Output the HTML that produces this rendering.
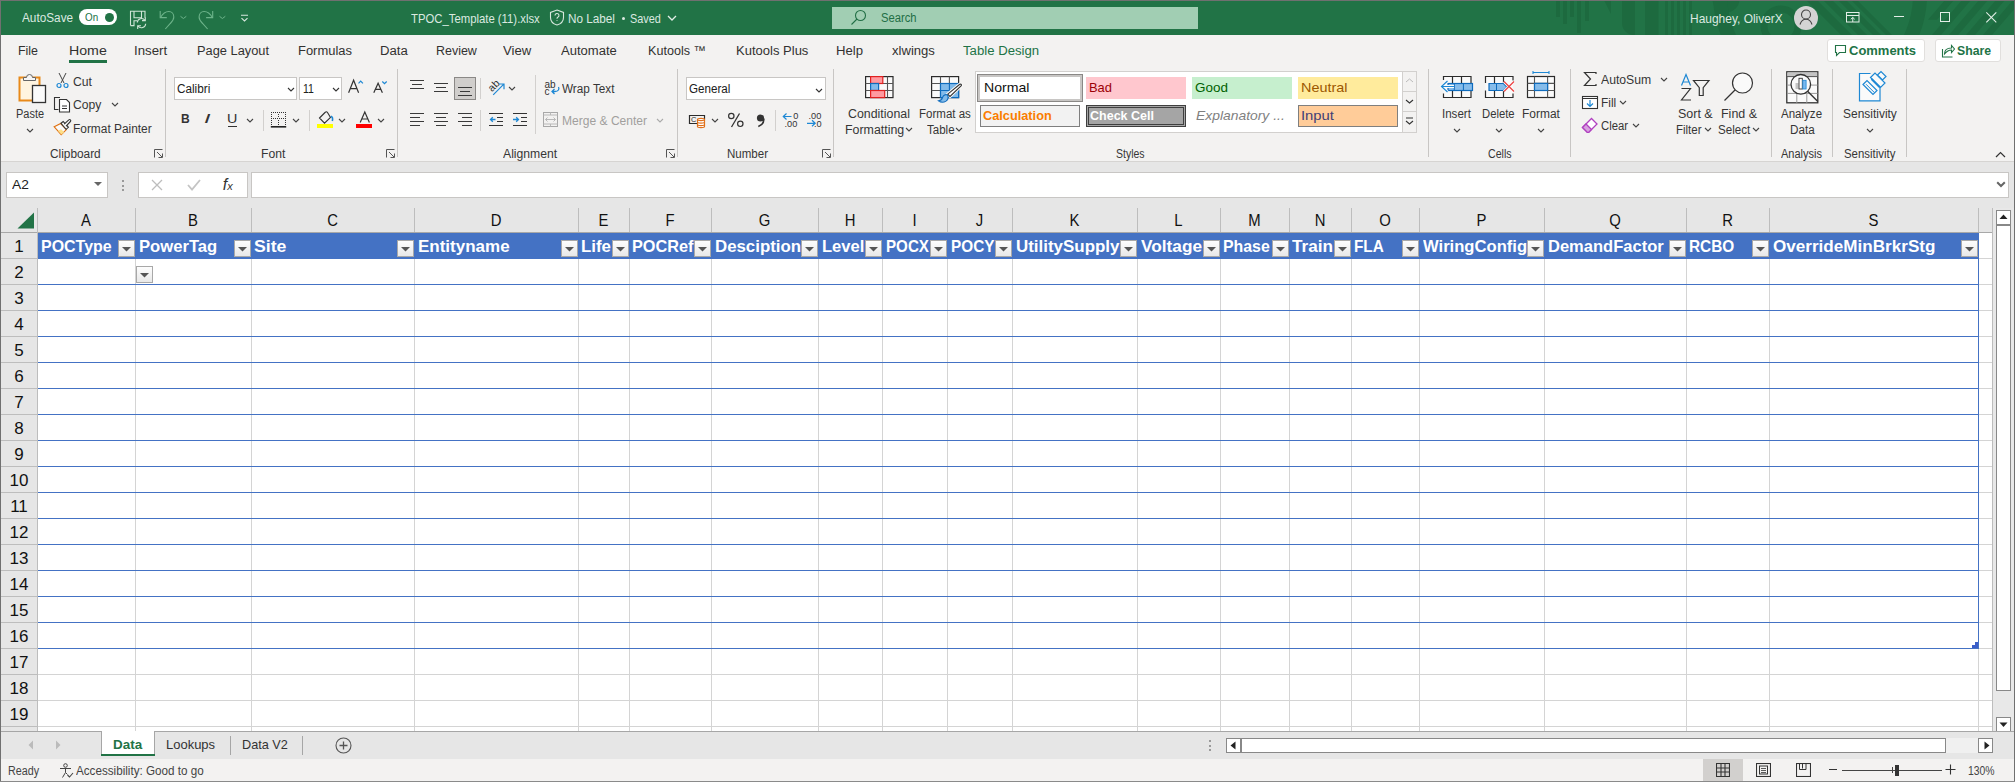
<!DOCTYPE html><html><head><meta charset="utf-8"><style>
html,body{margin:0;padding:0}
body{width:2015px;height:782px;overflow:hidden;position:relative;background:#f3f2f1;font-family:"Liberation Sans", sans-serif}
</style></head><body>
<div style="position:absolute;left:0px;top:0px;width:2015px;height:35px;background:#217346"></div>
<div id="t1" style="position:absolute;left:21.5px;top:11.53px;font-size:12.5px;line-height:12.5px;color:#dbe9e0;font-weight:normal;white-space:nowrap;transform:scaleX(0.9421);transform-origin:0 0;">AutoSave</div>
<div style="position:absolute;left:79px;top:9px;width:38px;height:16px;background:#fff;border-radius:8px"></div>
<div id="t2" style="position:absolute;left:84.54px;top:12.15px;font-size:11.5px;line-height:11.5px;color:#217346;font-weight:normal;white-space:nowrap;transform:scaleX(0.8537);transform-origin:0 0;">On</div>
<div style="position:absolute;left:105px;top:13px;width:9px;height:9px;background:#217346;border-radius:50%"></div>
<svg style="position:absolute;left:125px;top:5px;" width="130" height="27" viewBox="0 0 130 27"><path d="M5.5 20.6V6.3h14.5v6.5M9 6.3v6.5h7.5V6.3M5.5 20.6h3.5v-4.8h3" fill="none" stroke="#cfe5d7" stroke-width="1.1"/><path d="M12.3 17.5a4.2 4.2 0 0 1 7.6-2.2M20.7 18.8a4.2 4.2 0 0 1-7.6 2.2M20.3 12.3v3.3h-3.3M12.7 24v-3.3h3.3" fill="none" stroke="#cfe5d7" stroke-width="1.1"/><path d="M55.5 11.3l2.9 2.2 2.9-2.2M94.5 11.3l2.9 2.2 2.9-2.2" fill="none" stroke="#6db38a" stroke-width="1"/><path d="M116 10.3h7M116.5 13.2l3 2.8 3-2.8" fill="none" stroke="#d8e8de" stroke-width="1.1"/></svg>
<svg style="position:absolute;left:125px;top:5px;" width="130" height="27" viewBox="0 0 130 27"><path d="M35.2 6v6.6h6.6" fill="none" stroke="#6db38a" stroke-width="1.1"/><path d="M35.5 12.5c2-3.5 4.5-6 8.3-6 3 0 5 2.5 5 5.5 0 2.5-1.5 4.5-3.5 6.5l-5 5.5" fill="none" stroke="#6db38a" stroke-width="1.1"/></svg>
<svg style="position:absolute;left:125px;top:5px;" width="130" height="27" viewBox="0 0 130 27"><path d="M87.7 6v6.6h-6.6" fill="none" stroke="#6db38a" stroke-width="1.1"/><path d="M87.4 12.5c-2-3.5-4.5-6-8.3-6-3 0-5 2.5-5 5.5 0 2.5 1.5 4.5 3.5 6.5l5 5.5" fill="none" stroke="#6db38a" stroke-width="1.1"/></svg>
<div id="t3" style="position:absolute;left:411.48px;top:11.97px;font-size:13px;line-height:13px;color:#dbe9e0;font-weight:normal;white-space:nowrap;transform:scaleX(0.8710);transform-origin:0 0;">TPOC_Template (11).xlsx</div>
<svg style="position:absolute;left:549px;top:9px;" width="16" height="17" viewBox="0 0 16 17"><path d="M8 1l6.5 2.5v5c0 4-3 6.5-6.5 7.5C4.5 15 1.5 12.5 1.5 8.5v-5z" fill="none" stroke="#d8e8de" stroke-width="1.1"/><path d="M6 6.5a2 2 0 1 1 2.8 1.8c-.6.3-.8.7-.8 1.4M8 11.3v.8" fill="none" stroke="#d8e8de" stroke-width="1.1"/></svg>
<div id="t4" style="position:absolute;left:568.48px;top:11.97px;font-size:13px;line-height:13px;color:#dbe9e0;font-weight:normal;white-space:nowrap;transform:scaleX(0.9021);transform-origin:0 0;">No Label</div>
<div style="position:absolute;left:622px;top:17px;width:3px;height:3px;background:#dbe9e0;border-radius:50%"></div>
<div id="t5" style="position:absolute;left:630.48px;top:11.97px;font-size:13px;line-height:13px;color:#dbe9e0;font-weight:normal;white-space:nowrap;transform:scaleX(0.8354);transform-origin:0 0;">Saved</div>
<svg style="position:absolute;left:667px;top:15px;" width="10" height="7" viewBox="0 0 10 7"><path d="M1 1l4 4 4-4" fill="none" stroke="#e3eee7" stroke-width="1.3"/></svg>
<div style="position:absolute;left:832px;top:7px;width:366px;height:22px;background:#a1ceb3"></div>
<svg style="position:absolute;left:850px;top:9px;" width="17" height="17" viewBox="0 0 17 17"><circle cx="10.5" cy="6.5" r="5" fill="none" stroke="#226f46" stroke-width="1.1"/><path d="M7 10l-5.5 5.5" stroke="#226f46" stroke-width="1.1"/></svg>
<div id="t6" style="position:absolute;left:880.5px;top:12.03px;font-size:12.5px;line-height:12.5px;color:#226f46;font-weight:normal;white-space:nowrap;transform:scaleX(0.8969);transform-origin:0 0;">Search</div>
<svg style="position:absolute;left:0;top:0" width="2015" height="35" viewBox="0 0 2015 35"><rect x="1556" y="0" width="4" height="17" fill="#1d6a3f"/><rect x="1563" y="0" width="4" height="24" fill="#1d6a3f"/><rect x="1570" y="0" width="4" height="17" fill="#1d6a3f"/><rect x="1577" y="0" width="4" height="33" fill="#1d6a3f"/><rect x="1585" y="0" width="4" height="21" fill="#1d6a3f"/><path d="M1604 0h7v14z" fill="#1d6a3f"/><path d="M1622 0h13v35h-1a12 12 0 0 1-12-12z" fill="#1d6a3f"/><rect x="1645" y="0" width="13.5" height="35" fill="#1d6a3f"/><rect x="1665" y="0" width="3" height="35" fill="#1d6a3f"/><rect x="1671" y="0" width="3" height="35" fill="#1d6a3f"/><rect x="1677" y="0" width="3" height="35" fill="#1d6a3f"/><rect x="1683" y="0" width="3" height="35" fill="#1d6a3f"/><rect x="1689" y="0" width="3" height="35" fill="#1d6a3f"/><circle cx="1726" cy="-1" r="13.5" fill="#1d6a3f"/><circle cx="1781" cy="26" r="17" fill="none" stroke="#1d6a3f" stroke-width="7"/><path d="M1806 0h11l35 35h-11z" fill="#1d6a3f"/><path d="M1823 0h9l35 35h-9z" fill="#1d6a3f"/><path d="M1838 0h8l35 35h-8z" fill="#1d6a3f"/><path d="M1851 0h6l35 35h-6z" fill="#1d6a3f"/><circle cx="1820" cy="-5" r="100" fill="none" stroke="#1d6a3f" stroke-width="14"/><path d="M1945 0h9L1937.0 19.8H1928.0z" fill="#1d6a3f"/><path d="M1962 0h9L1941.0 35.0H1932.0z" fill="#1d6a3f"/><path d="M1979 0h9L1958.0 35.0H1949.0z" fill="#1d6a3f"/><path d="M1996 0h9L1975.0 35.0H1966.0z" fill="#1d6a3f"/><path d="M2013 0h9L1992.0 35.0H1983.0z" fill="#1d6a3f"/></svg>
<div id="t7" style="position:absolute;left:1690.48px;top:11.97px;font-size:13px;line-height:13px;color:#dbe9e0;font-weight:normal;white-space:nowrap;transform:scaleX(0.9199);transform-origin:0 0;">Haughey, OliverX</div>
<div style="position:absolute;left:1794px;top:6px;width:24px;height:24px;border-radius:50%;background:#d4d4d4"></div>
<svg style="position:absolute;left:1794px;top:6px;" width="24" height="24" viewBox="0 0 24 24"><circle cx="12" cy="8.5" r="4.5" fill="none" stroke="#444" stroke-width="1.1"/><path d="M6 18.5c1-3.5 3.3-5.3 6-5.3s5 1.8 6 5.3" fill="none" stroke="#444" stroke-width="1.1"/></svg>
<svg style="position:absolute;left:1845px;top:11px;" width="15" height="12" viewBox="0 0 15 12"><rect x="1.5" y="1.5" width="12.5" height="9.5" fill="none" stroke="#e3eee7" stroke-width="1"/><path d="M1.5 4.5h12.5M7.75 11V6.5M5.8 8.3l1.95-1.9 1.95 1.9" fill="none" stroke="#e3eee7" stroke-width="1"/></svg>
<div style="position:absolute;left:1894px;top:16px;width:10px;height:1px;background:#e3eee7"></div>
<div style="position:absolute;left:1940px;top:12px;width:10px;height:10px;border:1px solid #e3eee7;box-sizing:border-box"></div>
<svg style="position:absolute;left:1985px;top:11px;" width="13" height="13" viewBox="0 0 13 13"><path d="M1.3 1.3l10 10M11.3 1.3l-10 10" stroke="#e3eee7" stroke-width="1.1"/></svg>
<div id="t8" style="position:absolute;left:17.5px;top:44.53px;font-size:12.5px;line-height:12.5px;color:#323130;font-weight:normal;white-space:nowrap;transform:scaleX(0.9938);transform-origin:0 0;">File</div>
<div id="t9" style="position:absolute;left:69.0px;top:44.53px;font-size:12.5px;line-height:12.5px;color:#323130;font-weight:normal;white-space:nowrap;transform:scaleX(1.1326);transform-origin:0 0;">Home</div>
<div id="t10" style="position:absolute;left:133.5px;top:44.53px;font-size:12.5px;line-height:12.5px;color:#323130;font-weight:normal;white-space:nowrap;transform:scaleX(1.0605);transform-origin:0 0;">Insert</div>
<div id="t11" style="position:absolute;left:196.5px;top:44.53px;font-size:12.5px;line-height:12.5px;color:#323130;font-weight:normal;white-space:nowrap;transform:scaleX(1.0268);transform-origin:0 0;">Page Layout</div>
<div id="t12" style="position:absolute;left:297.5px;top:44.53px;font-size:12.5px;line-height:12.5px;color:#323130;font-weight:normal;white-space:nowrap;transform:scaleX(1.0361);transform-origin:0 0;">Formulas</div>
<div id="t13" style="position:absolute;left:379.5px;top:44.53px;font-size:12.5px;line-height:12.5px;color:#323130;font-weight:normal;white-space:nowrap;transform:scaleX(1.0529);transform-origin:0 0;">Data</div>
<div id="t14" style="position:absolute;left:435.5px;top:44.53px;font-size:12.5px;line-height:12.5px;color:#323130;font-weight:normal;white-space:nowrap;transform:scaleX(0.9970);transform-origin:0 0;">Review</div>
<div id="t15" style="position:absolute;left:503.0px;top:44.53px;font-size:12.5px;line-height:12.5px;color:#323130;font-weight:normal;white-space:nowrap;transform:scaleX(1.0509);transform-origin:0 0;">View</div>
<div id="t16" style="position:absolute;left:560.5px;top:44.53px;font-size:12.5px;line-height:12.5px;color:#323130;font-weight:normal;white-space:nowrap;transform:scaleX(1.0440);transform-origin:0 0;">Automate</div>
<div id="t17" style="position:absolute;left:647.5px;top:44.53px;font-size:12.5px;line-height:12.5px;color:#323130;font-weight:normal;white-space:nowrap;transform:scaleX(1.0065);transform-origin:0 0;">Kutools ™</div>
<div id="t18" style="position:absolute;left:735.5px;top:44.53px;font-size:12.5px;line-height:12.5px;color:#323130;font-weight:normal;white-space:nowrap;transform:scaleX(1.0417);transform-origin:0 0;">Kutools Plus</div>
<div id="t19" style="position:absolute;left:835.5px;top:44.53px;font-size:12.5px;line-height:12.5px;color:#323130;font-weight:normal;white-space:nowrap;transform:scaleX(1.0529);transform-origin:0 0;">Help</div>
<div id="t20" style="position:absolute;left:891.5px;top:44.53px;font-size:12.5px;line-height:12.5px;color:#323130;font-weight:normal;white-space:nowrap;transform:scaleX(1.0457);transform-origin:0 0;">xlwings</div>
<div id="t21" style="position:absolute;left:962.5px;top:44.53px;font-size:12.5px;line-height:12.5px;color:#217346;font-weight:normal;white-space:nowrap;transform:scaleX(1.0538);transform-origin:0 0;">Table Design</div>
<div style="position:absolute;left:69px;top:60px;width:38px;height:3px;background:#217346"></div>
<div style="position:absolute;left:1827px;top:39px;width:98px;height:23px;background:#fff;border:1px solid #e1dfdd;border-radius:3px;box-sizing:border-box"></div>
<svg style="position:absolute;left:1834px;top:44px;" width="13" height="13" viewBox="0 0 13 13"><path d="M1.5 1.5h10v7h-6l-3 3v-3h-1z" fill="none" stroke="#217346" stroke-width="1.1"/></svg>
<div id="t22" style="position:absolute;left:1849.48px;top:43.97px;font-size:13px;line-height:13px;color:#217346;font-weight:bold;white-space:nowrap;transform:scaleX(0.9987);transform-origin:0 0;">Comments</div>
<div style="position:absolute;left:1935px;top:39px;width:66px;height:23px;background:#fff;border:1px solid #e1dfdd;border-radius:3px;box-sizing:border-box"></div>
<svg style="position:absolute;left:1941px;top:43px;" width="14" height="15" viewBox="0 0 14 15"><path d="M1.5 6v8h10" fill="none" stroke="#217346" stroke-width="1.1"/><path d="M3.5 11c0-4 3-6 7-6V2.5l3 3.5-3 3.5V7c-3 0-5 1.5-7 4z" fill="none" stroke="#217346" stroke-width="1.1"/></svg>
<div id="t23" style="position:absolute;left:1957.48px;top:43.97px;font-size:13px;line-height:13px;color:#217346;font-weight:bold;white-space:nowrap;transform:scaleX(0.9419);transform-origin:0 0;">Share</div>
<div style="position:absolute;left:0px;top:161px;width:2015px;height:1px;background:#d6d4d2"></div>
<svg style="position:absolute;left:17px;top:72px;" width="31" height="32" viewBox="0 0 31 32"><rect x="2.5" y="5.5" width="20" height="23" fill="#fff4e0" stroke="#e8891a" stroke-width="2"/><path d="M6.5 8.5v-3h3a3 3 0 0 1 6 0h3v3z" fill="#f5f5f5" stroke="#666" stroke-width="1"/><rect x="15.5" y="13.5" width="13" height="17" fill="#fafafa" stroke="#333" stroke-width="1.3"/></svg>
<div id="t24" style="position:absolute;left:16.02px;top:108.09px;font-size:12px;line-height:12px;color:#363636;font-weight:normal;white-space:nowrap;transform:scaleX(0.9142);transform-origin:0 0;">Paste</div>
<svg style="position:absolute;left:26px;top:128px;" width="8" height="5" viewBox="0 0 8 5"><path d="M1 1l3.0 3 3.0 -3" fill="none" stroke="#444" stroke-width="1.1"/></svg>
<svg style="position:absolute;left:56px;top:72px;" width="13" height="17" viewBox="0 0 13 17"><path d="M3 1l5 10M10 1L5 11" stroke="#444" stroke-width="1"/><circle cx="3" cy="13.5" r="2" fill="none" stroke="#1e88d4" stroke-width="1.2"/><circle cx="10" cy="13.5" r="2" fill="none" stroke="#1e88d4" stroke-width="1.2"/></svg>
<div id="t25" style="position:absolute;left:73.02px;top:75.59px;font-size:12px;line-height:12px;color:#363636;font-weight:normal;white-space:nowrap;transform:scaleX(1.0179);transform-origin:0 0;">Cut</div>
<svg style="position:absolute;left:53px;top:95px;" width="18" height="18" viewBox="0 0 18 18"><path d="M7 2.5H1.5v12h4" fill="none" stroke="#333" stroke-width="1.1"/><path d="M6.5 4.5h7l3 3v9.5h-10z" fill="#fff" stroke="#333" stroke-width="1.1"/><path d="M9 11h5M9 13.5h5" stroke="#333" stroke-width="1"/></svg>
<div id="t26" style="position:absolute;left:73.02px;top:98.59px;font-size:12px;line-height:12px;color:#363636;font-weight:normal;white-space:nowrap;transform:scaleX(1.0121);transform-origin:0 0;">Copy</div>
<svg style="position:absolute;left:111px;top:102px;" width="8" height="5" viewBox="0 0 8 5"><path d="M1 1l3.0 3 3.0 -3" fill="none" stroke="#444" stroke-width="1.1"/></svg>
<svg style="position:absolute;left:50px;top:115px;" width="25" height="25" viewBox="0 0 25 25"><path d="M4.2 11.8l6.5-3.3 5.7 6.1-5.2 5z" fill="#fafafa" stroke="#e07010" stroke-width="1.2"/><path d="M7.8 15.8l3.3-1.6 3 3-2.7 2.3z" fill="#fde08a"/><path d="M11 8.3l2.2-1.8 5.2 5.8-2.3 2z" fill="#fafafa" stroke="#333" stroke-width="1.1"/><path d="M14.2 9.2l4.6-4.3a1.1 1.1 0 0 1 1.6 1.6l-4.3 4.6" fill="#fafafa" stroke="#333" stroke-width="1.1"/></svg>
<div id="t27" style="position:absolute;left:73.02px;top:123.09px;font-size:12px;line-height:12px;color:#363636;font-weight:normal;white-space:nowrap;transform:scaleX(0.9916);transform-origin:0 0;">Format Painter</div>
<div id="t28" style="position:absolute;left:49.52px;top:147.59px;font-size:12px;line-height:12px;color:#363636;font-weight:normal;white-space:nowrap;transform:scaleX(0.9871);transform-origin:0 0;">Clipboard</div>
<svg style="position:absolute;left:154px;top:149px;" width="9" height="9" viewBox="0 0 9 9"><path d="M0.5 8.5v-8h8" fill="none" stroke="#555" stroke-width="1"/><path d="M3 3l5 5M4.5 8.5h4v-4" fill="none" stroke="#555" stroke-width="1"/></svg>
<div style="position:absolute;left:165px;top:69px;width:1px;height:88px;background:#c8c6c4"></div>
<div style="position:absolute;left:174px;top:77px;width:123px;height:23px;background:#fff;border:1px solid #c8c6c4;box-sizing:border-box"></div>
<div id="t29" style="position:absolute;left:177.0px;top:82.53px;font-size:12.5px;line-height:12.5px;color:#202020;font-weight:normal;white-space:nowrap;transform:scaleX(0.9393);transform-origin:0 0;">Calibri</div>
<svg style="position:absolute;left:287px;top:87px;" width="8" height="5" viewBox="0 0 8 5"><path d="M1 1l3.0 3 3.0 -3" fill="none" stroke="#333" stroke-width="1.1"/></svg>
<div style="position:absolute;left:299px;top:77px;width:43px;height:23px;background:#fff;border:1px solid #c8c6c4;box-sizing:border-box"></div>
<div id="t30" style="position:absolute;left:302.5px;top:82.53px;font-size:12.5px;line-height:12.5px;color:#202020;font-weight:normal;white-space:nowrap;transform:scaleX(0.8365);transform-origin:0 0;">11</div>
<svg style="position:absolute;left:332px;top:87px;" width="8" height="5" viewBox="0 0 8 5"><path d="M1 1l3.0 3 3.0 -3" fill="none" stroke="#333" stroke-width="1.1"/></svg>
<svg style="position:absolute;left:265px;top:72px;" width="130" height="60" viewBox="0 0 130 60"><path d="M83.6 20.8L88.6 8.2l5 12.6M85.2 16.6h6.8" fill="none" stroke="#333" stroke-width="1.2"/><path d="M93.5 11.3l2.2-2.2 2.2 2.2" fill="none" stroke="#1e88d4" stroke-width="1.2"/><path d="M108.8 20.8l4.3-9.6 4.3 9.6M110.2 17.3h5.8" fill="none" stroke="#333" stroke-width="1.2"/><path d="M117.3 9.5l2.2 2.2 2.2-2.2" fill="none" stroke="#1e88d4" stroke-width="1.2"/></svg>
<div id="t31" style="position:absolute;left:180.96px;top:112.41px;font-size:13.5px;line-height:13.5px;color:#333;font-weight:bold;white-space:nowrap;transform:scaleX(0.8945);transform-origin:0 0;">B</div>
<div id="t32" style="position:absolute;left:203.96px;top:112.41px;font-size:13.5px;line-height:13.5px;color:#333;font-weight:normal;white-space:nowrap;transform:scaleX(1.7363);transform-origin:0 0;font-style:italic;font-family:"Liberation Serif",serif">I</div>
<div id="t33" style="position:absolute;left:227.48px;top:112.47px;font-size:13px;line-height:13px;color:#333;font-weight:normal;white-space:nowrap;transform:scaleX(1.1011);transform-origin:0 0;">U</div>
<div style="position:absolute;left:228px;top:126px;width:9px;height:1px;background:#333"></div>
<svg style="position:absolute;left:246px;top:118px;" width="8" height="5" viewBox="0 0 8 5"><path d="M1 1l3.0 3 3.0 -3" fill="none" stroke="#444" stroke-width="1.1"/></svg>
<div style="position:absolute;left:263px;top:110px;width:1px;height:21px;background:#d2d0ce"></div>
<svg style="position:absolute;left:265px;top:72px;" width="130" height="60" viewBox="0 0 130 60"><rect x="6" y="40" width="1" height="1" fill="#333"/><rect x="6" y="46" width="1" height="1" fill="#333"/><rect x="8" y="40" width="1" height="1" fill="#333"/><rect x="8" y="46" width="1" height="1" fill="#333"/><rect x="10" y="40" width="1" height="1" fill="#333"/><rect x="10" y="46" width="1" height="1" fill="#333"/><rect x="12" y="40" width="1" height="1" fill="#333"/><rect x="12" y="46" width="1" height="1" fill="#333"/><rect x="14" y="40" width="1" height="1" fill="#333"/><rect x="14" y="46" width="1" height="1" fill="#333"/><rect x="16" y="40" width="1" height="1" fill="#333"/><rect x="16" y="46" width="1" height="1" fill="#333"/><rect x="18" y="40" width="1" height="1" fill="#333"/><rect x="18" y="46" width="1" height="1" fill="#333"/><rect x="20" y="40" width="1" height="1" fill="#333"/><rect x="20" y="46" width="1" height="1" fill="#333"/><rect x="6" y="42" width="1" height="1" fill="#333"/><rect x="20" y="42" width="1" height="1" fill="#333"/><rect x="13" y="42" width="1" height="1" fill="#333"/><rect x="6" y="44" width="1" height="1" fill="#333"/><rect x="20" y="44" width="1" height="1" fill="#333"/><rect x="13" y="44" width="1" height="1" fill="#333"/><rect x="6" y="48" width="1" height="1" fill="#333"/><rect x="20" y="48" width="1" height="1" fill="#333"/><rect x="13" y="48" width="1" height="1" fill="#333"/><rect x="6" y="50" width="1" height="1" fill="#333"/><rect x="20" y="50" width="1" height="1" fill="#333"/><rect x="13" y="50" width="1" height="1" fill="#333"/><rect x="6" y="52" width="1" height="1" fill="#333"/><rect x="20" y="52" width="1" height="1" fill="#333"/><rect x="13" y="52" width="1" height="1" fill="#333"/><rect x="5.8" y="54" width="15.4" height="1.6" fill="#222"/></svg>
<svg style="position:absolute;left:292px;top:118px;" width="8" height="5" viewBox="0 0 8 5"><path d="M1 1l3.0 3 3.0 -3" fill="none" stroke="#444" stroke-width="1.1"/></svg>
<div style="position:absolute;left:309px;top:110px;width:1px;height:21px;background:#d2d0ce"></div>
<svg style="position:absolute;left:265px;top:72px;" width="130" height="60" viewBox="0 0 130 60"><path d="M54.5 46L60 40.5Q61.5 39 62.5 40.5L65.5 45.5 59.5 51.2Z" fill="none" stroke="#333" stroke-width="1.1"/><path d="M65.8 44.2c1.6 0.6 2.1 2.6 1.5 4.8" fill="none" stroke="#1e88d4" stroke-width="1.6"/></svg>
<div style="position:absolute;left:317px;top:124px;width:16px;height:4px;background:#ffff00"></div>
<svg style="position:absolute;left:338px;top:118px;" width="8" height="5" viewBox="0 0 8 5"><path d="M1 1l3.0 3 3.0 -3" fill="none" stroke="#444" stroke-width="1.1"/></svg>
<svg style="position:absolute;left:265px;top:72px;" width="130" height="60" viewBox="0 0 130 60"><path d="M95.2 50.5l4.6-10.5 4.6 10.5M96.7 47h6.2" fill="none" stroke="#333" stroke-width="1.2"/></svg>
<div style="position:absolute;left:356px;top:124px;width:16px;height:4px;background:#ff0000"></div>
<svg style="position:absolute;left:377px;top:118px;" width="8" height="5" viewBox="0 0 8 5"><path d="M1 1l3.0 3 3.0 -3" fill="none" stroke="#444" stroke-width="1.1"/></svg>
<div id="t34" style="position:absolute;left:261.02px;top:147.59px;font-size:12px;line-height:12px;color:#363636;font-weight:normal;white-space:nowrap;transform:scaleX(1.0142);transform-origin:0 0;">Font</div>
<svg style="position:absolute;left:386px;top:149px;" width="9" height="9" viewBox="0 0 9 9"><path d="M0.5 8.5v-8h8" fill="none" stroke="#555" stroke-width="1"/><path d="M3 3l5 5M4.5 8.5h4v-4" fill="none" stroke="#555" stroke-width="1"/></svg>
<div style="position:absolute;left:397px;top:69px;width:1px;height:88px;background:#c8c6c4"></div>
<div style="position:absolute;left:410px;top:80px;width:14px;height:1px;background:#3a3a3a"></div>
<div style="position:absolute;left:412px;top:84px;width:10px;height:1px;background:#3a3a3a"></div>
<div style="position:absolute;left:410px;top:88px;width:14px;height:1px;background:#3a3a3a"></div>
<div style="position:absolute;left:434px;top:83px;width:14px;height:1px;background:#3a3a3a"></div>
<div style="position:absolute;left:436px;top:87px;width:10px;height:1px;background:#3a3a3a"></div>
<div style="position:absolute;left:434px;top:91px;width:14px;height:1px;background:#3a3a3a"></div>
<div style="position:absolute;left:454px;top:77px;width:22px;height:23px;background:#d0cecc;border:1px solid #8a8886;box-sizing:border-box"></div>
<div style="position:absolute;left:458px;top:87px;width:14px;height:1px;background:#3a3a3a"></div>
<div style="position:absolute;left:460px;top:91px;width:10px;height:1px;background:#3a3a3a"></div>
<div style="position:absolute;left:458px;top:95px;width:14px;height:1px;background:#3a3a3a"></div>
<div style="position:absolute;left:480px;top:78px;width:1px;height:21px;background:#d2d0ce"></div>
<svg style="position:absolute;left:486px;top:78px;" width="20" height="19" viewBox="0 0 20 19"><text x="1.8" y="11.2" font-size="10.5" fill="#333" transform="rotate(-45 7.5 7.6)" font-family="Liberation Sans">ab</text><path d="M7.2 16.8L17.8 6.2M12.8 6h5.2v5.2" fill="none" stroke="#1e88d4" stroke-width="1.2"/></svg>
<svg style="position:absolute;left:508px;top:86px;" width="8" height="5" viewBox="0 0 8 5"><path d="M1 1l3.0 3 3.0 -3" fill="none" stroke="#444" stroke-width="1.1"/></svg>
<svg style="position:absolute;left:544px;top:78px;" width="17" height="19" viewBox="0 0 17 19"><text x="0.5" y="9.5" font-size="10" fill="#333" font-family="Liberation Sans">ab</text><text x="0.5" y="17" font-size="10" fill="#333" font-family="Liberation Sans">c</text><path d="M14.5 9c1 2 0 4.5-3.5 4.5H8M10.5 11l-2.5 2.5 2.5 2.5" fill="none" stroke="#1e88d4" stroke-width="1.3"/></svg>
<div id="t35" style="position:absolute;left:561.52px;top:82.59px;font-size:12px;line-height:12px;color:#363636;font-weight:normal;white-space:nowrap;transform:scaleX(0.9785);transform-origin:0 0;">Wrap Text</div>
<div style="position:absolute;left:535px;top:75px;width:1px;height:59px;background:#d2d0ce"></div>
<div style="position:absolute;left:410px;top:113px;width:14px;height:1px;background:#3a3a3a"></div>
<div style="position:absolute;left:410px;top:117px;width:10px;height:1px;background:#3a3a3a"></div>
<div style="position:absolute;left:410px;top:121px;width:14px;height:1px;background:#3a3a3a"></div>
<div style="position:absolute;left:410px;top:125px;width:10px;height:1px;background:#3a3a3a"></div>
<div style="position:absolute;left:434px;top:113px;width:14px;height:1px;background:#3a3a3a"></div>
<div style="position:absolute;left:436px;top:117px;width:10px;height:1px;background:#3a3a3a"></div>
<div style="position:absolute;left:434px;top:121px;width:14px;height:1px;background:#3a3a3a"></div>
<div style="position:absolute;left:436px;top:125px;width:10px;height:1px;background:#3a3a3a"></div>
<div style="position:absolute;left:458px;top:113px;width:14px;height:1px;background:#3a3a3a"></div>
<div style="position:absolute;left:462px;top:117px;width:10px;height:1px;background:#3a3a3a"></div>
<div style="position:absolute;left:458px;top:121px;width:14px;height:1px;background:#3a3a3a"></div>
<div style="position:absolute;left:462px;top:125px;width:10px;height:1px;background:#3a3a3a"></div>
<div style="position:absolute;left:480px;top:110px;width:1px;height:21px;background:#d2d0ce"></div>
<svg style="position:absolute;left:489px;top:112px;" width="15" height="16" viewBox="0 0 15 16"><rect x="0" y="1" width="14" height="1" fill="#333"/><rect x="8" y="5" width="6" height="1" fill="#333"/><rect x="8" y="9" width="6" height="1" fill="#333"/><rect x="0" y="13" width="14" height="1" fill="#333"/><path d="M6.5 7.5H1.5M3.8 5.2L1.5 7.5l2.3 2.3" fill="none" stroke="#1e88d4" stroke-width="1.3"/></svg>
<svg style="position:absolute;left:513px;top:112px;" width="15" height="16" viewBox="0 0 15 16"><rect x="0" y="1" width="14" height="1" fill="#333"/><rect x="8" y="5" width="6" height="1" fill="#333"/><rect x="8" y="9" width="6" height="1" fill="#333"/><rect x="0" y="13" width="14" height="1" fill="#333"/><path d="M0 7.5h5.5M3.2 5.2l2.3 2.3-2.3 2.3" fill="none" stroke="#1e88d4" stroke-width="1.3"/></svg>
<svg style="position:absolute;left:542px;top:111px;" width="17" height="17" viewBox="0 0 17 17"><rect x="1.5" y="1.5" width="14" height="14" fill="none" stroke="#a8a8a8" stroke-width="1"/><path d="M1.5 4h14M1.5 13h14M8.5 1.5v2.5M8.5 13v2.5M3.5 8.5h10M5.5 6.5l-2 2 2 2M11.5 6.5l2 2-2 2" fill="none" stroke="#b8b8b8" stroke-width="1"/></svg>
<div id="t36" style="position:absolute;left:562.02px;top:114.59px;font-size:12px;line-height:12px;color:#a19f9d;font-weight:normal;white-space:nowrap;transform:scaleX(1.0040);transform-origin:0 0;">Merge &amp; Center</div>
<svg style="position:absolute;left:656px;top:118px;" width="8" height="5" viewBox="0 0 8 5"><path d="M1 1l3.0 3 3.0 -3" fill="none" stroke="#aaa" stroke-width="1.1"/></svg>
<div id="t37" style="position:absolute;left:502.52px;top:147.59px;font-size:12px;line-height:12px;color:#363636;font-weight:normal;white-space:nowrap;transform:scaleX(1.0158);transform-origin:0 0;">Alignment</div>
<svg style="position:absolute;left:666px;top:149px;" width="9" height="9" viewBox="0 0 9 9"><path d="M0.5 8.5v-8h8" fill="none" stroke="#555" stroke-width="1"/><path d="M3 3l5 5M4.5 8.5h4v-4" fill="none" stroke="#555" stroke-width="1"/></svg>
<div style="position:absolute;left:677px;top:69px;width:1px;height:88px;background:#c8c6c4"></div>
<div style="position:absolute;left:686px;top:77px;width:140px;height:23px;background:#fff;border:1px solid #c8c6c4;box-sizing:border-box"></div>
<div id="t38" style="position:absolute;left:689.0px;top:82.53px;font-size:12.5px;line-height:12.5px;color:#202020;font-weight:normal;white-space:nowrap;transform:scaleX(0.9290);transform-origin:0 0;">General</div>
<svg style="position:absolute;left:815px;top:88px;" width="8" height="5" viewBox="0 0 8 5"><path d="M1 1l3.0 3 3.0 -3" fill="none" stroke="#333" stroke-width="1.1"/></svg>
<svg style="position:absolute;left:685px;top:108px;" width="145" height="24" viewBox="0 0 145 24"><path d="M12 15.5H4.5V7.5h15v4" fill="none" stroke="#2b2b2b" stroke-width="1.2"/><text x="6" y="14" font-size="7.5" fill="#2b2b2b" font-family="Liberation Sans">C</text><path d="M12.5 11.5c0-1.5 7-1.5 7 0v7c0 1.5-7 1.5-7 0z" fill="#fff" stroke="#e0701b" stroke-width="1.2"/><path d="M12.5 11.5c0 1.5 7 1.5 7 0M12.5 14c0 1.5 7 1.5 7 0M12.5 16.5c0 1.5 7 1.5 7 0" fill="none" stroke="#e0701b" stroke-width="1.1"/></svg>
<svg style="position:absolute;left:711px;top:117.5px;" width="8" height="5" viewBox="0 0 8 5"><path d="M1 1l3.0 3 3.0 -3" fill="none" stroke="#444" stroke-width="1.1"/></svg>
<svg style="position:absolute;left:685px;top:108px;" width="145" height="24" viewBox="0 0 145 24"><circle cx="46.3" cy="8" r="2.7" fill="none" stroke="#333" stroke-width="1.2"/><circle cx="55.3" cy="15.8" r="2.7" fill="none" stroke="#333" stroke-width="1.2"/><path d="M54.5 5.5L46.5 19" stroke="#333" stroke-width="1.3"/><circle cx="75.5" cy="10" r="3.6" fill="#333"/><path d="M78.8 10.5c0.3 3.5-1.5 6.5-5.5 8" fill="none" stroke="#333" stroke-width="1.6"/></svg>
<div style="position:absolute;left:775px;top:110px;width:1px;height:21px;background:#d2d0ce"></div>
<svg style="position:absolute;left:685px;top:108px;" width="145" height="24" viewBox="0 0 145 24"><text x="108.3" y="11" font-size="9.2" fill="#333" font-family="Liberation Sans">0</text><text x="99.5" y="19" font-size="9.2" fill="#333" font-family="Liberation Sans">.00</text><path d="M106.5 8.5H98.5M101.5 5.5L98.3 8.5l3.2 3" fill="none" stroke="#1e88d4" stroke-width="1.2"/></svg>
<svg style="position:absolute;left:685px;top:108px;" width="145" height="24" viewBox="0 0 145 24"><text x="123.5" y="11" font-size="9.2" fill="#333" font-family="Liberation Sans">.00</text><text x="129" y="19" font-size="9.2" fill="#333" font-family="Liberation Sans">.0</text><path d="M122 15.3h8M127 12.3l3.2 3-3.2 3" fill="none" stroke="#1e88d4" stroke-width="1.2"/></svg>
<div id="t39" style="position:absolute;left:727.02px;top:147.59px;font-size:12px;line-height:12px;color:#363636;font-weight:normal;white-space:nowrap;transform:scaleX(0.9614);transform-origin:0 0;">Number</div>
<svg style="position:absolute;left:822px;top:149px;" width="9" height="9" viewBox="0 0 9 9"><path d="M0.5 8.5v-8h8" fill="none" stroke="#555" stroke-width="1"/><path d="M3 3l5 5M4.5 8.5h4v-4" fill="none" stroke="#555" stroke-width="1"/></svg>
<div style="position:absolute;left:833px;top:69px;width:1px;height:88px;background:#c8c6c4"></div>
<svg style="position:absolute;left:855px;top:68px;" width="40" height="36" viewBox="0 0 40 36"><rect x="10.6" y="8.6" width="27.4" height="21" fill="#fafafa" stroke="#2b2b2b" stroke-width="1.2"/><path d="M10.6 15.5h27.4M10.6 22.5h27.4M32.5 8.6v21" stroke="#555" stroke-width="1.1"/><rect x="15.6" y="8.6" width="12.2" height="6.9" fill="#ff9aa0" stroke="#e02020" stroke-width="1.2"/><rect x="15.6" y="15.5" width="8" height="7" fill="#82bbea" stroke="#0f6cbd" stroke-width="1.2"/><rect x="15.6" y="22.5" width="14.1" height="7.1" fill="#ff9aa0" stroke="#e02020" stroke-width="1.2"/></svg>
<div id="t40" style="position:absolute;left:848.02px;top:108.09px;font-size:12px;line-height:12px;color:#363636;font-weight:normal;white-space:nowrap;transform:scaleX(1.0307);transform-origin:0 0;">Conditional</div>
<div id="t41" style="position:absolute;left:844.52px;top:124.09px;font-size:12px;line-height:12px;color:#363636;font-weight:normal;white-space:nowrap;transform:scaleX(1.0323);transform-origin:0 0;">Formatting</div>
<svg style="position:absolute;left:905px;top:127px;" width="8" height="5" viewBox="0 0 8 5"><path d="M1 1l3.0 3 3.0 -3" fill="none" stroke="#444" stroke-width="1.1"/></svg>
<svg style="position:absolute;left:855px;top:68px;" width="120" height="36" viewBox="0 0 120 36"><rect x="76.6" y="8.6" width="27" height="21" fill="#fafafa" stroke="#2b2b2b" stroke-width="1.2"/><path d="M85.5 8.6v21M94.4 8.6v21M76.6 15.5h27M76.6 22.5h27" stroke="#555" stroke-width="1.1"/><rect x="85.5" y="15.5" width="18.1" height="14.1" fill="#82bbea" stroke="#0f6cbd" stroke-width="1.2"/><path d="M94.4 15.5v14M85.5 22.5h18" stroke="#0f6cbd" stroke-width="1.1"/><path d="M104.5 16.5c1-1 2.5 0 1.8 1.2L95 28.5l-2.3-2.3z" fill="#fff" stroke="#fafafa" stroke-width="3"/><path d="M104.5 16.5c1-1 2.5 0 1.8 1.2L95 28.5l-2.3-2.3z" fill="#fff" stroke="#333" stroke-width="1.1"/><path d="M92.5 27c-2-1-4 0-5 2.5-.5 2-2 3-4 3.3 2 1.5 5 1.8 7.5 0.3 2-1.3 2.5-4 1.5-6.1z" fill="#82bbea" stroke="#0f6cbd" stroke-width="1.1"/></svg>
<div id="t42" style="position:absolute;left:919.02px;top:108.09px;font-size:12px;line-height:12px;color:#363636;font-weight:normal;white-space:nowrap;transform:scaleX(0.9600);transform-origin:0 0;">Format as</div>
<div id="t43" style="position:absolute;left:926.52px;top:124.09px;font-size:12px;line-height:12px;color:#363636;font-weight:normal;white-space:nowrap;transform:scaleX(0.9600);transform-origin:0 0;">Table</div>
<svg style="position:absolute;left:955px;top:127px;" width="8" height="5" viewBox="0 0 8 5"><path d="M1 1l3.0 3 3.0 -3" fill="none" stroke="#444" stroke-width="1.1"/></svg>
<div style="position:absolute;left:975px;top:71px;width:428px;height:62px;background:#fff;border:1px solid #d2d0ce;box-sizing:border-box"></div>
<div style="position:absolute;left:977px;top:74px;width:106px;height:28px;background:#fff;border:1px solid #8a8886;box-shadow:inset 0 0 0 2px #c8c6c4;box-sizing:border-box"></div>
<div id="t44" style="position:absolute;left:983.96px;top:80.91px;font-size:13.5px;line-height:13.5px;color:#101010;font-weight:normal;white-space:nowrap;transform:scaleX(1.0442);transform-origin:0 0;">Normal</div>
<div style="position:absolute;left:1086px;top:77px;width:100px;height:22px;background:#ffc7ce"></div>
<div id="t45" style="position:absolute;left:1089.46px;top:80.91px;font-size:13.5px;line-height:13.5px;color:#9c0006;font-weight:normal;white-space:nowrap;transform:scaleX(0.9560);transform-origin:0 0;">Bad</div>
<div style="position:absolute;left:1192px;top:77px;width:100px;height:22px;background:#c6efce"></div>
<div id="t46" style="position:absolute;left:1195.46px;top:80.91px;font-size:13.5px;line-height:13.5px;color:#006100;font-weight:normal;white-space:nowrap;transform:scaleX(0.9983);transform-origin:0 0;">Good</div>
<div style="position:absolute;left:1298px;top:77px;width:100px;height:22px;background:#ffeb9c"></div>
<div id="t47" style="position:absolute;left:1301.46px;top:80.91px;font-size:13.5px;line-height:13.5px;color:#9c5700;font-weight:normal;white-space:nowrap;transform:scaleX(1.0669);transform-origin:0 0;">Neutral</div>
<div style="position:absolute;left:980px;top:105px;width:100px;height:22px;background:#f2f2f2;border:1px solid #7f7f7f;box-sizing:border-box"></div>
<div id="t48" style="position:absolute;left:983.46px;top:108.91px;font-size:13.5px;line-height:13.5px;color:#fa7d00;font-weight:bold;white-space:nowrap;transform:scaleX(0.9445);transform-origin:0 0;">Calculation</div>
<div style="position:absolute;left:1086px;top:105px;width:100px;height:22px;background:#a5a5a5;border:1px solid #3f3f3f;box-shadow:inset 0 0 0 1px #a5a5a5,inset 0 0 0 2px #3f3f3f;box-sizing:border-box"></div>
<div id="t49" style="position:absolute;left:1089.96px;top:108.91px;font-size:13.5px;line-height:13.5px;color:#fff;font-weight:bold;white-space:nowrap;transform:scaleX(0.9267);transform-origin:0 0;">Check Cell</div>
<div id="t50" style="position:absolute;left:1195.96px;top:108.91px;font-size:13.5px;line-height:13.5px;color:#7f7f7f;font-weight:normal;white-space:nowrap;transform:scaleX(1.0284);transform-origin:0 0;font-style:italic">Explanatory ...</div>
<div style="position:absolute;left:1298px;top:105px;width:100px;height:22px;background:#ffcc99;border:1px solid #7f7f7f;box-sizing:border-box"></div>
<div id="t51" style="position:absolute;left:1301.46px;top:108.91px;font-size:13.5px;line-height:13.5px;color:#3f3f76;font-weight:normal;white-space:nowrap;transform:scaleX(1.0982);transform-origin:0 0;">Input</div>
<div style="position:absolute;left:1402px;top:71px;width:15px;height:62px;background:#f3f2f1;border:1px solid #d2d0ce;box-sizing:border-box"></div>
<div style="position:absolute;left:1402px;top:91px;width:15px;height:1px;background:#d2d0ce"></div>
<div style="position:absolute;left:1402px;top:111px;width:15px;height:1px;background:#d2d0ce"></div>
<svg style="position:absolute;left:1405px;top:78px;" width="9" height="5" viewBox="0 0 9 5"><path d="M1 4l3.5-3 3.5 3" fill="none" stroke="#bbb" stroke-width="1"/></svg>
<svg style="position:absolute;left:1405px;top:99px;" width="9" height="5" viewBox="0 0 9 5"><path d="M1 1l3.5 3 3.5-3" fill="none" stroke="#333" stroke-width="1.1"/></svg>
<svg style="position:absolute;left:1405px;top:117px;" width="9" height="9" viewBox="0 0 9 9"><path d="M1 1h7M1 4l3.5 3 3.5-3" fill="none" stroke="#333" stroke-width="1.1"/></svg>
<div id="t52" style="position:absolute;left:1116.02px;top:147.59px;font-size:12px;line-height:12px;color:#363636;font-weight:normal;white-space:nowrap;transform:scaleX(0.8739);transform-origin:0 0;">Styles</div>
<div style="position:absolute;left:1428px;top:69px;width:1px;height:88px;background:#c8c6c4"></div>
<svg style="position:absolute;left:1438px;top:68px;" width="40" height="34" viewBox="0 0 40 34"><rect x="5.5" y="8.5" width="27.5" height="21" fill="#fafafa"/><path d="M5.5 12V8.5h27.5v21H5.5V25.5M14.5 8.5v21M23.5 8.5v21" fill="none" stroke="#2b2b2b" stroke-width="1.2"/><rect x="10" y="15.5" width="24.5" height="7" fill="#86bcea" stroke="#0f6cbd" stroke-width="1.2"/><path d="M16.3 15.5v7M25.4 15.5v7" stroke="#0f6cbd" stroke-width="1"/><path d="M16 18.5H4M9.5 13L3.5 18.5 9.5 24" fill="none" stroke="#fafafa" stroke-width="3"/><path d="M16 18.5H4M9.5 13L3.5 18.5 9.5 24" fill="none" stroke="#1e88d4" stroke-width="1.2"/></svg>
<div id="t53" style="position:absolute;left:1442.02px;top:108.09px;font-size:12px;line-height:12px;color:#363636;font-weight:normal;white-space:nowrap;transform:scaleX(0.9613);transform-origin:0 0;">Insert</div>
<svg style="position:absolute;left:1453px;top:128px;" width="8" height="5" viewBox="0 0 8 5"><path d="M1 1l3.0 3 3.0 -3" fill="none" stroke="#444" stroke-width="1.1"/></svg>
<svg style="position:absolute;left:1438px;top:68px;" width="80" height="34" viewBox="0 0 80 34"><rect x="47.5" y="8.5" width="27.5" height="21" fill="#fafafa"/><path d="M47.5 15V8.5h27.5v4M47.5 22.5v7h27.5v-4M56.5 8.5v21M65.5 8.5v21" fill="none" stroke="#2b2b2b" stroke-width="1.2"/><path d="M51 15.5h14.5l3.5 3.5-3.5 3.5H51z" fill="#86bcea" stroke="#0f6cbd" stroke-width="1.2"/><path d="M58.5 15.5v7" stroke="#0f6cbd" stroke-width="1"/><path d="M66 13.5l10 10M76 13.5l-10 10" stroke="#fafafa" stroke-width="3"/><path d="M66 13.5l10 10M76 13.5l-10 10" stroke="#ec4040" stroke-width="1.2"/></svg>
<div id="t54" style="position:absolute;left:1482.02px;top:108.09px;font-size:12px;line-height:12px;color:#363636;font-weight:normal;white-space:nowrap;transform:scaleX(0.9383);transform-origin:0 0;">Delete</div>
<svg style="position:absolute;left:1495px;top:128px;" width="8" height="5" viewBox="0 0 8 5"><path d="M1 1l3.0 3 3.0 -3" fill="none" stroke="#444" stroke-width="1.1"/></svg>
<svg style="position:absolute;left:1438px;top:68px;" width="122" height="34" viewBox="0 0 122 34"><path d="M95 4.5h16M95 3v3M111 3v3" stroke="#1e88d4" stroke-width="1.1"/><rect x="89.5" y="8.5" width="27" height="21" fill="#fafafa" stroke="#2b2b2b" stroke-width="1.2"/><path d="M96.5 8.5v21M109.6 8.5v21M89.5 15.4h27M89.5 22.5h27" stroke="#555" stroke-width="1.1"/><rect x="96.5" y="15.4" width="13.1" height="7.1" fill="#86bcea" stroke="#0f6cbd" stroke-width="1.2"/></svg>
<div id="t55" style="position:absolute;left:1522.02px;top:108.09px;font-size:12px;line-height:12px;color:#363636;font-weight:normal;white-space:nowrap;transform:scaleX(0.9958);transform-origin:0 0;">Format</div>
<svg style="position:absolute;left:1537px;top:128px;" width="8" height="5" viewBox="0 0 8 5"><path d="M1 1l3.0 3 3.0 -3" fill="none" stroke="#444" stroke-width="1.1"/></svg>
<div id="t56" style="position:absolute;left:1487.52px;top:147.59px;font-size:12px;line-height:12px;color:#363636;font-weight:normal;white-space:nowrap;transform:scaleX(0.8830);transform-origin:0 0;">Cells</div>
<div style="position:absolute;left:1570px;top:69px;width:1px;height:88px;background:#c8c6c4"></div>
<svg style="position:absolute;left:1582px;top:71px;" width="16" height="16" viewBox="0 0 16 16"><path d="M14 3V1.5H2.5L8.5 8l-6 6.5H14V13" fill="none" stroke="#333" stroke-width="1.2"/></svg>
<div id="t57" style="position:absolute;left:1601.02px;top:73.59px;font-size:12px;line-height:12px;color:#363636;font-weight:normal;white-space:nowrap;transform:scaleX(1.0171);transform-origin:0 0;">AutoSum</div>
<svg style="position:absolute;left:1660px;top:77px;" width="8" height="5" viewBox="0 0 8 5"><path d="M1 1l3.0 3 3.0 -3" fill="none" stroke="#444" stroke-width="1.1"/></svg>
<svg style="position:absolute;left:1581px;top:95px;" width="18" height="15" viewBox="0 0 18 15"><rect x="1.5" y="1.5" width="15" height="12" fill="#fff" stroke="#333" stroke-width="1.1"/><path d="M1.5 3.5h15" stroke="#333" stroke-width="1"/><path d="M9 5v6.5M6 8.5l3 3 3-3" fill="none" stroke="#1e88d4" stroke-width="1.2"/></svg>
<div id="t58" style="position:absolute;left:1601.02px;top:96.59px;font-size:12px;line-height:12px;color:#363636;font-weight:normal;white-space:nowrap;transform:scaleX(0.9893);transform-origin:0 0;">Fill</div>
<svg style="position:absolute;left:1619px;top:100px;" width="8" height="5" viewBox="0 0 8 5"><path d="M1 1l3.0 3 3.0 -3" fill="none" stroke="#444" stroke-width="1.1"/></svg>
<svg style="position:absolute;left:1581px;top:117px;" width="17" height="16" viewBox="0 0 17 16"><path d="M1.5 10.5l9-9 5.5 5.5-9 9z" fill="#fff" stroke="#b040c0" stroke-width="1.3"/><path d="M1.5 10.5l3.5-3.5 5.5 5.5-3.5 3.5z" fill="#d8a0e0" stroke="#b040c0" stroke-width="1.3"/></svg>
<div id="t59" style="position:absolute;left:1601.02px;top:120.09px;font-size:12px;line-height:12px;color:#363636;font-weight:normal;white-space:nowrap;transform:scaleX(0.9428);transform-origin:0 0;">Clear</div>
<svg style="position:absolute;left:1632px;top:123px;" width="8" height="5" viewBox="0 0 8 5"><path d="M1 1l3.0 3 3.0 -3" fill="none" stroke="#444" stroke-width="1.1"/></svg>
<svg style="position:absolute;left:1680px;top:73px;" width="31" height="29" viewBox="0 0 31 29"><path d="M1.5 12.5L6 1.5l4.5 11M3 9h6" fill="none" stroke="#1e88d4" stroke-width="1.2"/><path d="M1.5 15.5h9l-9 11.5h9.5" fill="none" stroke="#333" stroke-width="1.2"/><path d="M13.5 7.5h15.5l-5.8 7.2v7.8h-3.9v-7.8z" fill="none" stroke="#333" stroke-width="1.2"/></svg>
<div id="t60" style="position:absolute;left:1677.52px;top:108.09px;font-size:12px;line-height:12px;color:#363636;font-weight:normal;white-space:nowrap;transform:scaleX(1.0406);transform-origin:0 0;">Sort &amp;</div>
<div id="t61" style="position:absolute;left:1676.02px;top:124.09px;font-size:12px;line-height:12px;color:#363636;font-weight:normal;white-space:nowrap;transform:scaleX(0.9570);transform-origin:0 0;">Filter</div>
<svg style="position:absolute;left:1704px;top:127px;" width="8" height="5" viewBox="0 0 8 5"><path d="M1 1l3.0 3 3.0 -3" fill="none" stroke="#444" stroke-width="1.1"/></svg>
<svg style="position:absolute;left:1722px;top:71px;" width="32" height="32" viewBox="0 0 32 32"><circle cx="20.5" cy="12" r="10" fill="#fafafa" stroke="#333" stroke-width="1.2"/><path d="M13 19L2.5 29.5" stroke="#333" stroke-width="1.2"/></svg>
<div id="t62" style="position:absolute;left:1720.52px;top:108.09px;font-size:12px;line-height:12px;color:#363636;font-weight:normal;white-space:nowrap;transform:scaleX(1.0383);transform-origin:0 0;">Find &amp;</div>
<div id="t63" style="position:absolute;left:1717.52px;top:124.09px;font-size:12px;line-height:12px;color:#363636;font-weight:normal;white-space:nowrap;transform:scaleX(0.9648);transform-origin:0 0;">Select</div>
<svg style="position:absolute;left:1752px;top:127px;" width="8" height="5" viewBox="0 0 8 5"><path d="M1 1l3.0 3 3.0 -3" fill="none" stroke="#444" stroke-width="1.1"/></svg>
<div style="position:absolute;left:1771px;top:69px;width:1px;height:88px;background:#c8c6c4"></div>
<svg style="position:absolute;left:1780px;top:66px;" width="40" height="40" viewBox="0 0 40 40"><rect x="6.8" y="5.8" width="31" height="31" fill="#fafafa" stroke="#333" stroke-width="1.3"/><rect x="7.4" y="6.4" width="29.8" height="4.3" fill="#c4c4c4"/><path d="M7 10.6h30.5" stroke="#555" stroke-width="1"/><path d="M7 19.1h30.5M7 27.4h30.5M16.8 27.4v9.5M26.8 27.4v9.5" stroke="#999" stroke-width="1"/><circle cx="20.8" cy="18.3" r="9.8" fill="#fafafa" stroke="#333" stroke-width="1.3"/><rect x="15.5" y="17" width="3" height="6" fill="#c4c4c4"/><rect x="19" y="12.3" width="3.3" height="10.7" fill="#fff" stroke="#333" stroke-width="0.9"/><rect x="22.8" y="14.3" width="3.3" height="8.7" fill="#7ab8ee" stroke="#1e88d4" stroke-width="0.8"/><path d="M27.8 25.5l10 10" stroke="#333" stroke-width="1.4"/></svg>
<div id="t64" style="position:absolute;left:1781.02px;top:108.09px;font-size:12px;line-height:12px;color:#363636;font-weight:normal;white-space:nowrap;transform:scaleX(0.9614);transform-origin:0 0;">Analyze</div>
<div id="t65" style="position:absolute;left:1790.02px;top:124.09px;font-size:12px;line-height:12px;color:#363636;font-weight:normal;white-space:nowrap;transform:scaleX(0.9736);transform-origin:0 0;">Data</div>
<div id="t66" style="position:absolute;left:1780.52px;top:147.59px;font-size:12px;line-height:12px;color:#363636;font-weight:normal;white-space:nowrap;transform:scaleX(0.9187);transform-origin:0 0;">Analysis</div>
<div style="position:absolute;left:1832px;top:69px;width:1px;height:88px;background:#c8c6c4"></div>
<svg style="position:absolute;left:1850px;top:66px;" width="40" height="40" viewBox="0 0 40 40"><path d="M20.5 7.5H9.5v27.3h20.5V22" fill="#fafafa" stroke="#1e88d4" stroke-width="1.2"/><path d="M13 18.5l4-4 10 10-4 4z" fill="#fafafa" stroke="#1e88d4" stroke-width="1.2"/><path d="M16 18.2l8.5 8.5" stroke="#1e88d4" stroke-width="1"/><path d="M20.5 11.5l4.5-4.5 10 10-4.5 4.5z" fill="#fafafa" stroke="#1e88d4" stroke-width="1.2"/><path d="M21.5 13l8.5 8.5" stroke="#1e88d4" stroke-width="2"/><path d="M27.5 9l3.5-3.5 5 5-3.5 3.5z" fill="#fafafa" stroke="#1e88d4" stroke-width="1.2"/></svg>
<div id="t67" style="position:absolute;left:1842.52px;top:108.09px;font-size:12px;line-height:12px;color:#363636;font-weight:normal;white-space:nowrap;transform:scaleX(0.9970);transform-origin:0 0;">Sensitivity</div>
<svg style="position:absolute;left:1866px;top:128px;" width="8" height="5" viewBox="0 0 8 5"><path d="M1 1l3.0 3 3.0 -3" fill="none" stroke="#444" stroke-width="1.1"/></svg>
<div id="t68" style="position:absolute;left:1844.02px;top:147.59px;font-size:12px;line-height:12px;color:#363636;font-weight:normal;white-space:nowrap;transform:scaleX(0.9507);transform-origin:0 0;">Sensitivity</div>
<div style="position:absolute;left:1906px;top:69px;width:1px;height:88px;background:#c8c6c4"></div>
<svg style="position:absolute;left:1995px;top:151px;" width="11" height="7" viewBox="0 0 11 7"><path d="M1 6l4.5-4.5L10 6" fill="none" stroke="#333" stroke-width="1.2"/></svg>
<div style="position:absolute;left:0px;top:162px;width:2015px;height:569px;background:#e6e6e6"></div>
<div style="position:absolute;left:6px;top:172px;width:102px;height:26px;background:#fff;border:1px solid #c8c6c4;box-sizing:border-box"></div>
<div id="t69" style="position:absolute;left:12.48px;top:177.97px;font-size:13px;line-height:13px;color:#202020;font-weight:normal;white-space:nowrap;transform:scaleX(1.0569);transform-origin:0 0;">A2</div>
<svg style="position:absolute;left:93px;top:181px;" width="10" height="6" viewBox="0 0 10 6"><path d="M1 1h8L5 5z" fill="#666"/></svg>
<div style="position:absolute;left:122px;top:180px;width:2px;height:2px;background:#999"></div>
<div style="position:absolute;left:122px;top:184.5px;width:2px;height:2px;background:#999"></div>
<div style="position:absolute;left:122px;top:189px;width:2px;height:2px;background:#999"></div>
<div style="position:absolute;left:138px;top:172px;width:110px;height:26px;background:#fff;border:1px solid #c8c6c4;box-sizing:border-box"></div>
<svg style="position:absolute;left:151px;top:179px;" width="12" height="12" viewBox="0 0 12 12"><path d="M1 1l10 10M11 1L1 11" stroke="#bdbdbd" stroke-width="1.3"/></svg>
<svg style="position:absolute;left:187px;top:179px;" width="14" height="12" viewBox="0 0 14 12"><path d="M1 6l4 4.5L13 1" fill="none" stroke="#c4c4c4" stroke-width="1.8"/></svg>
<div id="t70" style="position:absolute;left:222.86px;top:177.12px;font-size:16px;line-height:16px;color:#333;font-weight:normal;white-space:nowrap;font-family:"Liberation Serif",serif"><i>f</i><span style="font-size:11px"><i>x</i></span></div>
<div style="position:absolute;left:251px;top:172px;width:1758px;height:26px;background:#fff;border:1px solid #c8c6c4;box-sizing:border-box"></div>
<svg style="position:absolute;left:1996px;top:181px;" width="10" height="7" viewBox="0 0 10 7"><path d="M1.2 1.2l3.8 3.8 3.8-3.8" fill="none" stroke="#666" stroke-width="2"/></svg>
<div style="position:absolute;left:1px;top:208px;width:1992px;height:523px;background:#fff"></div>
<div style="position:absolute;left:1px;top:208px;width:1992px;height:24px;background:#e6e6e6"></div>
<div style="position:absolute;left:1px;top:208px;width:36px;height:523px;background:#e6e6e6"></div>
<svg style="position:absolute;left:17px;top:212px;" width="18" height="17" viewBox="0 0 18 17"><path d="M17 0.5V16.5H0.5z" fill="#217346"/></svg>
<div style="position:absolute;left:1px;top:232px;width:1992px;height:1px;background:#a8a8a8"></div>
<div style="position:absolute;left:37px;top:208px;width:1px;height:523px;background:#bdbdbd"></div>
<div style="position:absolute;left:135px;top:208px;width:1px;height:24px;background:#bdbdbd"></div>
<div style="position:absolute;left:135px;top:233px;width:1px;height:498px;background:#d4d4d4"></div>
<div style="position:absolute;left:251px;top:208px;width:1px;height:24px;background:#bdbdbd"></div>
<div style="position:absolute;left:251px;top:233px;width:1px;height:498px;background:#d4d4d4"></div>
<div style="position:absolute;left:414px;top:208px;width:1px;height:24px;background:#bdbdbd"></div>
<div style="position:absolute;left:414px;top:233px;width:1px;height:498px;background:#d4d4d4"></div>
<div style="position:absolute;left:578px;top:208px;width:1px;height:24px;background:#bdbdbd"></div>
<div style="position:absolute;left:578px;top:233px;width:1px;height:498px;background:#d4d4d4"></div>
<div style="position:absolute;left:629px;top:208px;width:1px;height:24px;background:#bdbdbd"></div>
<div style="position:absolute;left:629px;top:233px;width:1px;height:498px;background:#d4d4d4"></div>
<div style="position:absolute;left:711px;top:208px;width:1px;height:24px;background:#bdbdbd"></div>
<div style="position:absolute;left:711px;top:233px;width:1px;height:498px;background:#d4d4d4"></div>
<div style="position:absolute;left:818px;top:208px;width:1px;height:24px;background:#bdbdbd"></div>
<div style="position:absolute;left:818px;top:233px;width:1px;height:498px;background:#d4d4d4"></div>
<div style="position:absolute;left:882px;top:208px;width:1px;height:24px;background:#bdbdbd"></div>
<div style="position:absolute;left:882px;top:233px;width:1px;height:498px;background:#d4d4d4"></div>
<div style="position:absolute;left:947px;top:208px;width:1px;height:24px;background:#bdbdbd"></div>
<div style="position:absolute;left:947px;top:233px;width:1px;height:498px;background:#d4d4d4"></div>
<div style="position:absolute;left:1012px;top:208px;width:1px;height:24px;background:#bdbdbd"></div>
<div style="position:absolute;left:1012px;top:233px;width:1px;height:498px;background:#d4d4d4"></div>
<div style="position:absolute;left:1137px;top:208px;width:1px;height:24px;background:#bdbdbd"></div>
<div style="position:absolute;left:1137px;top:233px;width:1px;height:498px;background:#d4d4d4"></div>
<div style="position:absolute;left:1220px;top:208px;width:1px;height:24px;background:#bdbdbd"></div>
<div style="position:absolute;left:1220px;top:233px;width:1px;height:498px;background:#d4d4d4"></div>
<div style="position:absolute;left:1289px;top:208px;width:1px;height:24px;background:#bdbdbd"></div>
<div style="position:absolute;left:1289px;top:233px;width:1px;height:498px;background:#d4d4d4"></div>
<div style="position:absolute;left:1351px;top:208px;width:1px;height:24px;background:#bdbdbd"></div>
<div style="position:absolute;left:1351px;top:233px;width:1px;height:498px;background:#d4d4d4"></div>
<div style="position:absolute;left:1419px;top:208px;width:1px;height:24px;background:#bdbdbd"></div>
<div style="position:absolute;left:1419px;top:233px;width:1px;height:498px;background:#d4d4d4"></div>
<div style="position:absolute;left:1544px;top:208px;width:1px;height:24px;background:#bdbdbd"></div>
<div style="position:absolute;left:1544px;top:233px;width:1px;height:498px;background:#d4d4d4"></div>
<div style="position:absolute;left:1686px;top:208px;width:1px;height:24px;background:#bdbdbd"></div>
<div style="position:absolute;left:1686px;top:233px;width:1px;height:498px;background:#d4d4d4"></div>
<div style="position:absolute;left:1769px;top:208px;width:1px;height:24px;background:#bdbdbd"></div>
<div style="position:absolute;left:1769px;top:233px;width:1px;height:498px;background:#d4d4d4"></div>
<div style="position:absolute;left:1978px;top:208px;width:1px;height:24px;background:#bdbdbd"></div>
<div style="position:absolute;left:1978px;top:233px;width:1px;height:498px;background:#d4d4d4"></div>
<div style="position:absolute;left:1992px;top:208px;width:1px;height:24px;background:#bdbdbd"></div>
<div style="position:absolute;left:1992px;top:233px;width:1px;height:498px;background:#d4d4d4"></div>
<div style="position:absolute;left:37px;width:98px;top:212.06px;font-size:16.5px;line-height:16.5px;text-align:center;color:#111;transform:scaleX(0.9)">A</div>
<div style="position:absolute;left:135px;width:116px;top:212.06px;font-size:16.5px;line-height:16.5px;text-align:center;color:#111;transform:scaleX(0.9)">B</div>
<div style="position:absolute;left:251px;width:163px;top:212.06px;font-size:16.5px;line-height:16.5px;text-align:center;color:#111;transform:scaleX(0.9)">C</div>
<div style="position:absolute;left:414px;width:164px;top:212.06px;font-size:16.5px;line-height:16.5px;text-align:center;color:#111;transform:scaleX(0.9)">D</div>
<div style="position:absolute;left:578px;width:51px;top:212.06px;font-size:16.5px;line-height:16.5px;text-align:center;color:#111;transform:scaleX(0.9)">E</div>
<div style="position:absolute;left:629px;width:82px;top:212.06px;font-size:16.5px;line-height:16.5px;text-align:center;color:#111;transform:scaleX(0.9)">F</div>
<div style="position:absolute;left:711px;width:107px;top:212.06px;font-size:16.5px;line-height:16.5px;text-align:center;color:#111;transform:scaleX(0.9)">G</div>
<div style="position:absolute;left:818px;width:64px;top:212.06px;font-size:16.5px;line-height:16.5px;text-align:center;color:#111;transform:scaleX(0.9)">H</div>
<div style="position:absolute;left:882px;width:65px;top:212.06px;font-size:16.5px;line-height:16.5px;text-align:center;color:#111;transform:scaleX(0.9)">I</div>
<div style="position:absolute;left:947px;width:65px;top:212.06px;font-size:16.5px;line-height:16.5px;text-align:center;color:#111;transform:scaleX(0.9)">J</div>
<div style="position:absolute;left:1012px;width:125px;top:212.06px;font-size:16.5px;line-height:16.5px;text-align:center;color:#111;transform:scaleX(0.9)">K</div>
<div style="position:absolute;left:1137px;width:83px;top:212.06px;font-size:16.5px;line-height:16.5px;text-align:center;color:#111;transform:scaleX(0.9)">L</div>
<div style="position:absolute;left:1220px;width:69px;top:212.06px;font-size:16.5px;line-height:16.5px;text-align:center;color:#111;transform:scaleX(0.9)">M</div>
<div style="position:absolute;left:1289px;width:62px;top:212.06px;font-size:16.5px;line-height:16.5px;text-align:center;color:#111;transform:scaleX(0.9)">N</div>
<div style="position:absolute;left:1351px;width:68px;top:212.06px;font-size:16.5px;line-height:16.5px;text-align:center;color:#111;transform:scaleX(0.9)">O</div>
<div style="position:absolute;left:1419px;width:125px;top:212.06px;font-size:16.5px;line-height:16.5px;text-align:center;color:#111;transform:scaleX(0.9)">P</div>
<div style="position:absolute;left:1544px;width:142px;top:212.06px;font-size:16.5px;line-height:16.5px;text-align:center;color:#111;transform:scaleX(0.9)">Q</div>
<div style="position:absolute;left:1686px;width:83px;top:212.06px;font-size:16.5px;line-height:16.5px;text-align:center;color:#111;transform:scaleX(0.9)">R</div>
<div style="position:absolute;left:1769px;width:209px;top:212.06px;font-size:16.5px;line-height:16.5px;text-align:center;color:#111;transform:scaleX(0.9)">S</div>
<div style="position:absolute;left:1px;top:258px;width:36px;height:1px;background:#bdbdbd"></div>
<div style="position:absolute;left:38px;top:258px;width:1955px;height:1px;background:#d4d4d4"></div>
<div style="position:absolute;left:1px;width:36px;top:238.00px;font-size:17px;line-height:17px;text-align:center;color:#111">1</div>
<div style="position:absolute;left:1px;top:284px;width:36px;height:1px;background:#bdbdbd"></div>
<div style="position:absolute;left:38px;top:284px;width:1955px;height:1px;background:#d4d4d4"></div>
<div style="position:absolute;left:1px;width:36px;top:264.00px;font-size:17px;line-height:17px;text-align:center;color:#111">2</div>
<div style="position:absolute;left:1px;top:310px;width:36px;height:1px;background:#bdbdbd"></div>
<div style="position:absolute;left:38px;top:310px;width:1955px;height:1px;background:#d4d4d4"></div>
<div style="position:absolute;left:1px;width:36px;top:290.00px;font-size:17px;line-height:17px;text-align:center;color:#111">3</div>
<div style="position:absolute;left:1px;top:336px;width:36px;height:1px;background:#bdbdbd"></div>
<div style="position:absolute;left:38px;top:336px;width:1955px;height:1px;background:#d4d4d4"></div>
<div style="position:absolute;left:1px;width:36px;top:316.00px;font-size:17px;line-height:17px;text-align:center;color:#111">4</div>
<div style="position:absolute;left:1px;top:362px;width:36px;height:1px;background:#bdbdbd"></div>
<div style="position:absolute;left:38px;top:362px;width:1955px;height:1px;background:#d4d4d4"></div>
<div style="position:absolute;left:1px;width:36px;top:342.00px;font-size:17px;line-height:17px;text-align:center;color:#111">5</div>
<div style="position:absolute;left:1px;top:388px;width:36px;height:1px;background:#bdbdbd"></div>
<div style="position:absolute;left:38px;top:388px;width:1955px;height:1px;background:#d4d4d4"></div>
<div style="position:absolute;left:1px;width:36px;top:368.00px;font-size:17px;line-height:17px;text-align:center;color:#111">6</div>
<div style="position:absolute;left:1px;top:414px;width:36px;height:1px;background:#bdbdbd"></div>
<div style="position:absolute;left:38px;top:414px;width:1955px;height:1px;background:#d4d4d4"></div>
<div style="position:absolute;left:1px;width:36px;top:394.00px;font-size:17px;line-height:17px;text-align:center;color:#111">7</div>
<div style="position:absolute;left:1px;top:440px;width:36px;height:1px;background:#bdbdbd"></div>
<div style="position:absolute;left:38px;top:440px;width:1955px;height:1px;background:#d4d4d4"></div>
<div style="position:absolute;left:1px;width:36px;top:420.00px;font-size:17px;line-height:17px;text-align:center;color:#111">8</div>
<div style="position:absolute;left:1px;top:466px;width:36px;height:1px;background:#bdbdbd"></div>
<div style="position:absolute;left:38px;top:466px;width:1955px;height:1px;background:#d4d4d4"></div>
<div style="position:absolute;left:1px;width:36px;top:446.00px;font-size:17px;line-height:17px;text-align:center;color:#111">9</div>
<div style="position:absolute;left:1px;top:492px;width:36px;height:1px;background:#bdbdbd"></div>
<div style="position:absolute;left:38px;top:492px;width:1955px;height:1px;background:#d4d4d4"></div>
<div style="position:absolute;left:1px;width:36px;top:472.00px;font-size:17px;line-height:17px;text-align:center;color:#111">10</div>
<div style="position:absolute;left:1px;top:518px;width:36px;height:1px;background:#bdbdbd"></div>
<div style="position:absolute;left:38px;top:518px;width:1955px;height:1px;background:#d4d4d4"></div>
<div style="position:absolute;left:1px;width:36px;top:498.00px;font-size:17px;line-height:17px;text-align:center;color:#111">11</div>
<div style="position:absolute;left:1px;top:544px;width:36px;height:1px;background:#bdbdbd"></div>
<div style="position:absolute;left:38px;top:544px;width:1955px;height:1px;background:#d4d4d4"></div>
<div style="position:absolute;left:1px;width:36px;top:524.00px;font-size:17px;line-height:17px;text-align:center;color:#111">12</div>
<div style="position:absolute;left:1px;top:570px;width:36px;height:1px;background:#bdbdbd"></div>
<div style="position:absolute;left:38px;top:570px;width:1955px;height:1px;background:#d4d4d4"></div>
<div style="position:absolute;left:1px;width:36px;top:550.00px;font-size:17px;line-height:17px;text-align:center;color:#111">13</div>
<div style="position:absolute;left:1px;top:596px;width:36px;height:1px;background:#bdbdbd"></div>
<div style="position:absolute;left:38px;top:596px;width:1955px;height:1px;background:#d4d4d4"></div>
<div style="position:absolute;left:1px;width:36px;top:576.00px;font-size:17px;line-height:17px;text-align:center;color:#111">14</div>
<div style="position:absolute;left:1px;top:622px;width:36px;height:1px;background:#bdbdbd"></div>
<div style="position:absolute;left:38px;top:622px;width:1955px;height:1px;background:#d4d4d4"></div>
<div style="position:absolute;left:1px;width:36px;top:602.00px;font-size:17px;line-height:17px;text-align:center;color:#111">15</div>
<div style="position:absolute;left:1px;top:648px;width:36px;height:1px;background:#bdbdbd"></div>
<div style="position:absolute;left:38px;top:648px;width:1955px;height:1px;background:#d4d4d4"></div>
<div style="position:absolute;left:1px;width:36px;top:628.00px;font-size:17px;line-height:17px;text-align:center;color:#111">16</div>
<div style="position:absolute;left:1px;top:674px;width:36px;height:1px;background:#bdbdbd"></div>
<div style="position:absolute;left:38px;top:674px;width:1955px;height:1px;background:#d4d4d4"></div>
<div style="position:absolute;left:1px;width:36px;top:654.00px;font-size:17px;line-height:17px;text-align:center;color:#111">17</div>
<div style="position:absolute;left:1px;top:700px;width:36px;height:1px;background:#bdbdbd"></div>
<div style="position:absolute;left:38px;top:700px;width:1955px;height:1px;background:#d4d4d4"></div>
<div style="position:absolute;left:1px;width:36px;top:680.00px;font-size:17px;line-height:17px;text-align:center;color:#111">18</div>
<div style="position:absolute;left:1px;top:726px;width:36px;height:1px;background:#bdbdbd"></div>
<div style="position:absolute;left:38px;top:726px;width:1955px;height:1px;background:#d4d4d4"></div>
<div style="position:absolute;left:1px;width:36px;top:706.00px;font-size:17px;line-height:17px;text-align:center;color:#111">19</div>
<div style="position:absolute;left:1px;width:36px;top:732.00px;font-size:17px;line-height:17px;text-align:center;color:#111">20</div>
<div style="position:absolute;left:38px;top:233px;width:1941px;height:26px;background:#4472c4"></div>
<div style="position:absolute;left:38px;top:284px;width:1941px;height:1px;background:#4472c4"></div>
<div style="position:absolute;left:38px;top:310px;width:1941px;height:1px;background:#4472c4"></div>
<div style="position:absolute;left:38px;top:336px;width:1941px;height:1px;background:#4472c4"></div>
<div style="position:absolute;left:38px;top:362px;width:1941px;height:1px;background:#4472c4"></div>
<div style="position:absolute;left:38px;top:388px;width:1941px;height:1px;background:#4472c4"></div>
<div style="position:absolute;left:38px;top:414px;width:1941px;height:1px;background:#4472c4"></div>
<div style="position:absolute;left:38px;top:440px;width:1941px;height:1px;background:#4472c4"></div>
<div style="position:absolute;left:38px;top:466px;width:1941px;height:1px;background:#4472c4"></div>
<div style="position:absolute;left:38px;top:492px;width:1941px;height:1px;background:#4472c4"></div>
<div style="position:absolute;left:38px;top:518px;width:1941px;height:1px;background:#4472c4"></div>
<div style="position:absolute;left:38px;top:544px;width:1941px;height:1px;background:#4472c4"></div>
<div style="position:absolute;left:38px;top:570px;width:1941px;height:1px;background:#4472c4"></div>
<div style="position:absolute;left:38px;top:596px;width:1941px;height:1px;background:#4472c4"></div>
<div style="position:absolute;left:38px;top:622px;width:1941px;height:1px;background:#4472c4"></div>
<div style="position:absolute;left:38px;top:648px;width:1941px;height:1px;background:#4472c4"></div>
<div style="position:absolute;left:1978px;top:233px;width:1px;height:416px;background:#4472c4"></div>
<div id="t71" style="position:absolute;left:40.84px;top:238.06px;font-size:16.5px;line-height:16.5px;color:#fff;font-weight:bold;white-space:nowrap;transform:scaleX(0.9679);transform-origin:0 0;">POCType</div>
<div id="t72" style="position:absolute;left:138.84px;top:238.06px;font-size:16.5px;line-height:16.5px;color:#fff;font-weight:bold;white-space:nowrap;transform:scaleX(1.0084);transform-origin:0 0;">PowerTag</div>
<div id="t73" style="position:absolute;left:254.34px;top:238.06px;font-size:16.5px;line-height:16.5px;color:#fff;font-weight:bold;white-space:nowrap;transform:scaleX(1.0718);transform-origin:0 0;">Site</div>
<div id="t74" style="position:absolute;left:417.84px;top:238.06px;font-size:16.5px;line-height:16.5px;color:#fff;font-weight:bold;white-space:nowrap;transform:scaleX(1.0298);transform-origin:0 0;">Entityname</div>
<div id="t75" style="position:absolute;left:581.34px;top:238.06px;font-size:16.5px;line-height:16.5px;color:#fff;font-weight:bold;white-space:nowrap;transform:scaleX(1.0226);transform-origin:0 0;">Life</div>
<div id="t76" style="position:absolute;left:632.34px;top:238.06px;font-size:16.5px;line-height:16.5px;color:#fff;font-weight:bold;white-space:nowrap;transform:scaleX(0.9864);transform-origin:0 0;">POCRef</div>
<div id="t77" style="position:absolute;left:714.84px;top:238.06px;font-size:16.5px;line-height:16.5px;color:#fff;font-weight:bold;white-space:nowrap;transform:scaleX(1.0197);transform-origin:0 0;">Desciption</div>
<div id="t78" style="position:absolute;left:821.84px;top:238.06px;font-size:16.5px;line-height:16.5px;color:#fff;font-weight:bold;white-space:nowrap;transform:scaleX(1.0037);transform-origin:0 0;">Level</div>
<div id="t79" style="position:absolute;left:885.84px;top:238.06px;font-size:16.5px;line-height:16.5px;color:#fff;font-weight:bold;white-space:nowrap;transform:scaleX(0.9182);transform-origin:0 0;">POCX</div>
<div id="t80" style="position:absolute;left:950.84px;top:238.06px;font-size:16.5px;line-height:16.5px;color:#fff;font-weight:bold;white-space:nowrap;transform:scaleX(0.9288);transform-origin:0 0;">POCY</div>
<div id="t81" style="position:absolute;left:1015.84px;top:238.06px;font-size:16.5px;line-height:16.5px;color:#fff;font-weight:bold;white-space:nowrap;transform:scaleX(1.0263);transform-origin:0 0;">UtilitySupply</div>
<div id="t82" style="position:absolute;left:1140.84px;top:238.06px;font-size:16.5px;line-height:16.5px;color:#fff;font-weight:bold;white-space:nowrap;transform:scaleX(1.0458);transform-origin:0 0;">Voltage</div>
<div id="t83" style="position:absolute;left:1223.34px;top:238.06px;font-size:16.5px;line-height:16.5px;color:#fff;font-weight:bold;white-space:nowrap;transform:scaleX(0.9623);transform-origin:0 0;">Phase</div>
<div id="t84" style="position:absolute;left:1292.34px;top:238.06px;font-size:16.5px;line-height:16.5px;color:#fff;font-weight:bold;white-space:nowrap;transform:scaleX(1.0424);transform-origin:0 0;">Train</div>
<div id="t85" style="position:absolute;left:1354.34px;top:238.06px;font-size:16.5px;line-height:16.5px;color:#fff;font-weight:bold;white-space:nowrap;transform:scaleX(0.9267);transform-origin:0 0;">FLA</div>
<div id="t86" style="position:absolute;left:1422.84px;top:238.06px;font-size:16.5px;line-height:16.5px;color:#fff;font-weight:bold;white-space:nowrap;transform:scaleX(1.0064);transform-origin:0 0;">WiringConfig</div>
<div id="t87" style="position:absolute;left:1547.84px;top:238.06px;font-size:16.5px;line-height:16.5px;color:#fff;font-weight:bold;white-space:nowrap;transform:scaleX(1.0013);transform-origin:0 0;">DemandFactor</div>
<div id="t88" style="position:absolute;left:1689.34px;top:238.06px;font-size:16.5px;line-height:16.5px;color:#fff;font-weight:bold;white-space:nowrap;transform:scaleX(0.9317);transform-origin:0 0;">RCBO</div>
<div id="t89" style="position:absolute;left:1772.84px;top:238.06px;font-size:16.5px;line-height:16.5px;color:#fff;font-weight:bold;white-space:nowrap;transform:scaleX(1.0360);transform-origin:0 0;">OverrideMinBrkrStg</div>
<div style="position:absolute;left:118px;top:240px;width:17px;height:17px;background:linear-gradient(#fdfdfd,#e8e8e8);border:1px solid #a8a8a8;box-sizing:border-box"></div>
<svg style="position:absolute;left:122px;top:247px;" width="9" height="5" viewBox="0 0 9 5"><path d="M0 0h9L4.5 4.5z" fill="#555"/></svg>
<div style="position:absolute;left:234px;top:240px;width:17px;height:17px;background:linear-gradient(#fdfdfd,#e8e8e8);border:1px solid #a8a8a8;box-sizing:border-box"></div>
<svg style="position:absolute;left:238px;top:247px;" width="9" height="5" viewBox="0 0 9 5"><path d="M0 0h9L4.5 4.5z" fill="#555"/></svg>
<div style="position:absolute;left:397px;top:240px;width:17px;height:17px;background:linear-gradient(#fdfdfd,#e8e8e8);border:1px solid #a8a8a8;box-sizing:border-box"></div>
<svg style="position:absolute;left:401px;top:247px;" width="9" height="5" viewBox="0 0 9 5"><path d="M0 0h9L4.5 4.5z" fill="#555"/></svg>
<div style="position:absolute;left:561px;top:240px;width:17px;height:17px;background:linear-gradient(#fdfdfd,#e8e8e8);border:1px solid #a8a8a8;box-sizing:border-box"></div>
<svg style="position:absolute;left:565px;top:247px;" width="9" height="5" viewBox="0 0 9 5"><path d="M0 0h9L4.5 4.5z" fill="#555"/></svg>
<div style="position:absolute;left:612px;top:240px;width:17px;height:17px;background:linear-gradient(#fdfdfd,#e8e8e8);border:1px solid #a8a8a8;box-sizing:border-box"></div>
<svg style="position:absolute;left:616px;top:247px;" width="9" height="5" viewBox="0 0 9 5"><path d="M0 0h9L4.5 4.5z" fill="#555"/></svg>
<div style="position:absolute;left:694px;top:240px;width:17px;height:17px;background:linear-gradient(#fdfdfd,#e8e8e8);border:1px solid #a8a8a8;box-sizing:border-box"></div>
<svg style="position:absolute;left:698px;top:247px;" width="9" height="5" viewBox="0 0 9 5"><path d="M0 0h9L4.5 4.5z" fill="#555"/></svg>
<div style="position:absolute;left:801px;top:240px;width:17px;height:17px;background:linear-gradient(#fdfdfd,#e8e8e8);border:1px solid #a8a8a8;box-sizing:border-box"></div>
<svg style="position:absolute;left:805px;top:247px;" width="9" height="5" viewBox="0 0 9 5"><path d="M0 0h9L4.5 4.5z" fill="#555"/></svg>
<div style="position:absolute;left:865px;top:240px;width:17px;height:17px;background:linear-gradient(#fdfdfd,#e8e8e8);border:1px solid #a8a8a8;box-sizing:border-box"></div>
<svg style="position:absolute;left:869px;top:247px;" width="9" height="5" viewBox="0 0 9 5"><path d="M0 0h9L4.5 4.5z" fill="#555"/></svg>
<div style="position:absolute;left:930px;top:240px;width:17px;height:17px;background:linear-gradient(#fdfdfd,#e8e8e8);border:1px solid #a8a8a8;box-sizing:border-box"></div>
<svg style="position:absolute;left:934px;top:247px;" width="9" height="5" viewBox="0 0 9 5"><path d="M0 0h9L4.5 4.5z" fill="#555"/></svg>
<div style="position:absolute;left:995px;top:240px;width:17px;height:17px;background:linear-gradient(#fdfdfd,#e8e8e8);border:1px solid #a8a8a8;box-sizing:border-box"></div>
<svg style="position:absolute;left:999px;top:247px;" width="9" height="5" viewBox="0 0 9 5"><path d="M0 0h9L4.5 4.5z" fill="#555"/></svg>
<div style="position:absolute;left:1120px;top:240px;width:17px;height:17px;background:linear-gradient(#fdfdfd,#e8e8e8);border:1px solid #a8a8a8;box-sizing:border-box"></div>
<svg style="position:absolute;left:1124px;top:247px;" width="9" height="5" viewBox="0 0 9 5"><path d="M0 0h9L4.5 4.5z" fill="#555"/></svg>
<div style="position:absolute;left:1203px;top:240px;width:17px;height:17px;background:linear-gradient(#fdfdfd,#e8e8e8);border:1px solid #a8a8a8;box-sizing:border-box"></div>
<svg style="position:absolute;left:1207px;top:247px;" width="9" height="5" viewBox="0 0 9 5"><path d="M0 0h9L4.5 4.5z" fill="#555"/></svg>
<div style="position:absolute;left:1272px;top:240px;width:17px;height:17px;background:linear-gradient(#fdfdfd,#e8e8e8);border:1px solid #a8a8a8;box-sizing:border-box"></div>
<svg style="position:absolute;left:1276px;top:247px;" width="9" height="5" viewBox="0 0 9 5"><path d="M0 0h9L4.5 4.5z" fill="#555"/></svg>
<div style="position:absolute;left:1334px;top:240px;width:17px;height:17px;background:linear-gradient(#fdfdfd,#e8e8e8);border:1px solid #a8a8a8;box-sizing:border-box"></div>
<svg style="position:absolute;left:1338px;top:247px;" width="9" height="5" viewBox="0 0 9 5"><path d="M0 0h9L4.5 4.5z" fill="#555"/></svg>
<div style="position:absolute;left:1402px;top:240px;width:17px;height:17px;background:linear-gradient(#fdfdfd,#e8e8e8);border:1px solid #a8a8a8;box-sizing:border-box"></div>
<svg style="position:absolute;left:1406px;top:247px;" width="9" height="5" viewBox="0 0 9 5"><path d="M0 0h9L4.5 4.5z" fill="#555"/></svg>
<div style="position:absolute;left:1527px;top:240px;width:17px;height:17px;background:linear-gradient(#fdfdfd,#e8e8e8);border:1px solid #a8a8a8;box-sizing:border-box"></div>
<svg style="position:absolute;left:1531px;top:247px;" width="9" height="5" viewBox="0 0 9 5"><path d="M0 0h9L4.5 4.5z" fill="#555"/></svg>
<div style="position:absolute;left:1669px;top:240px;width:17px;height:17px;background:linear-gradient(#fdfdfd,#e8e8e8);border:1px solid #a8a8a8;box-sizing:border-box"></div>
<svg style="position:absolute;left:1673px;top:247px;" width="9" height="5" viewBox="0 0 9 5"><path d="M0 0h9L4.5 4.5z" fill="#555"/></svg>
<div style="position:absolute;left:1752px;top:240px;width:17px;height:17px;background:linear-gradient(#fdfdfd,#e8e8e8);border:1px solid #a8a8a8;box-sizing:border-box"></div>
<svg style="position:absolute;left:1756px;top:247px;" width="9" height="5" viewBox="0 0 9 5"><path d="M0 0h9L4.5 4.5z" fill="#555"/></svg>
<div style="position:absolute;left:1961px;top:240px;width:17px;height:17px;background:linear-gradient(#fdfdfd,#e8e8e8);border:1px solid #a8a8a8;box-sizing:border-box"></div>
<svg style="position:absolute;left:1965px;top:247px;" width="9" height="5" viewBox="0 0 9 5"><path d="M0 0h9L4.5 4.5z" fill="#555"/></svg>
<div style="position:absolute;left:136px;top:266px;width:17px;height:17px;background:linear-gradient(#fdfdfd,#e8e8e8);border:1px solid #a8a8a8;box-sizing:border-box"></div>
<svg style="position:absolute;left:140px;top:273px;" width="9" height="5" viewBox="0 0 9 5"><path d="M0 0h9L4.5 4.5z" fill="#555"/></svg>
<svg style="position:absolute;left:1972px;top:642px;" width="7" height="7" viewBox="0 0 7 7"><path d="M6 0v6H0V3h3V0z" fill="#3a5ec8"/></svg>
<div style="position:absolute;left:1992px;top:232px;width:1px;height:499px;background:#bdbdbd"></div>
<div style="position:absolute;left:1993px;top:208px;width:21px;height:523px;background:#e8e8e8"></div>
<div style="position:absolute;left:1996px;top:210px;width:15px;height:15px;background:#fff;border:1px solid #888;box-sizing:border-box"></div>
<svg style="position:absolute;left:1999px;top:214px;" width="9" height="6" viewBox="0 0 9 6"><path d="M0.5 5L4.5 0.5 8.5 5z" fill="#222"/></svg>
<div style="position:absolute;left:1996px;top:225px;width:15px;height:466px;background:#fff;border:1px solid #888;box-sizing:border-box"></div>
<div style="position:absolute;left:1996px;top:717px;width:15px;height:15px;background:#fff;border:1px solid #888;box-sizing:border-box"></div>
<svg style="position:absolute;left:1999px;top:722px;" width="9" height="6" viewBox="0 0 9 6"><path d="M0.5 0.5L4.5 5 8.5 0.5z" fill="#222"/></svg>
<div style="position:absolute;left:1px;top:731px;width:2013px;height:1px;background:#a6a6a6"></div>
<div style="position:absolute;left:1px;top:732px;width:2013px;height:27px;background:#e6e6e6"></div>
<svg style="position:absolute;left:27px;top:740px;" width="7" height="10" viewBox="0 0 7 10"><path d="M6 0.5L1.5 5 6 9.5z" fill="#bbb"/></svg>
<svg style="position:absolute;left:55px;top:740px;" width="7" height="10" viewBox="0 0 7 10"><path d="M1 0.5L5.5 5 1 9.5z" fill="#bbb"/></svg>
<div style="position:absolute;left:101px;top:731px;width:54px;height:25px;background:#fff;border-left:1px solid #a6a6a6;border-right:1px solid #a6a6a6;box-sizing:border-box"></div>
<div style="position:absolute;left:101px;top:754px;width:54px;height:2px;background:#217346"></div>
<div id="t90" style="position:absolute;left:112.98px;top:738.47px;font-size:13px;line-height:13px;color:#217346;font-weight:bold;white-space:nowrap;transform:scaleX(1.0325);transform-origin:0 0;">Data</div>
<div id="t91" style="position:absolute;left:166.48px;top:738.47px;font-size:13px;line-height:13px;color:#333;font-weight:normal;white-space:nowrap;transform:scaleX(0.9982);transform-origin:0 0;">Lookups</div>
<div style="position:absolute;left:230px;top:736px;width:1px;height:19px;background:#a6a6a6"></div>
<div id="t92" style="position:absolute;left:242.48px;top:738.47px;font-size:13px;line-height:13px;color:#333;font-weight:normal;white-space:nowrap;transform:scaleX(0.9768);transform-origin:0 0;">Data V2</div>
<div style="position:absolute;left:302px;top:736px;width:1px;height:19px;background:#a6a6a6"></div>
<svg style="position:absolute;left:335px;top:737px;" width="17" height="17" viewBox="0 0 17 17"><circle cx="8.5" cy="8.5" r="7.5" fill="none" stroke="#555" stroke-width="1.1"/><path d="M8.5 4.5v8M4.5 8.5h8" stroke="#555" stroke-width="1.3"/></svg>
<div style="position:absolute;left:1209px;top:740px;width:2px;height:2px;background:#9a9a9a"></div>
<div style="position:absolute;left:1209px;top:744.5px;width:2px;height:2px;background:#9a9a9a"></div>
<div style="position:absolute;left:1209px;top:749px;width:2px;height:2px;background:#9a9a9a"></div>
<div style="position:absolute;left:1226px;top:738px;width:15px;height:15px;background:#fff;border:1px solid #888;box-sizing:border-box"></div>
<svg style="position:absolute;left:1230px;top:741px;" width="6" height="9" viewBox="0 0 6 9"><path d="M5.5 0.5v8L0.5 4.5z" fill="#222"/></svg>
<div style="position:absolute;left:1241px;top:738px;width:705px;height:15px;background:#fff;border:1px solid #888;box-sizing:border-box"></div>
<div style="position:absolute;left:1946px;top:738px;width:32px;height:15px;background:#f0f0f0"></div>
<div style="position:absolute;left:1978px;top:738px;width:15px;height:15px;background:#fff;border:1px solid #888;box-sizing:border-box"></div>
<svg style="position:absolute;left:1984px;top:741px;" width="6" height="9" viewBox="0 0 6 9"><path d="M0.5 0.5v8l5-4z" fill="#222"/></svg>
<div style="position:absolute;left:1px;top:759px;width:2013px;height:23px;background:#f3f2f1"></div>
<div id="t93" style="position:absolute;left:7.52px;top:764.59px;font-size:12px;line-height:12px;color:#444;font-weight:normal;white-space:nowrap;transform:scaleX(0.8954);transform-origin:0 0;">Ready</div>
<svg style="position:absolute;left:59px;top:763px;" width="15" height="15" viewBox="0 0 15 15"><circle cx="6.5" cy="2.5" r="1.8" fill="none" stroke="#444" stroke-width="1"/><path d="M1 5.5h11M6.5 5.5v4l-3 5M6.5 9.5l2 2" fill="none" stroke="#444" stroke-width="1"/><path d="M8.5 12l2 2 3.5-4" fill="none" stroke="#444" stroke-width="1.1"/></svg>
<div id="t94" style="position:absolute;left:75.52px;top:764.59px;font-size:12px;line-height:12px;color:#444;font-weight:normal;white-space:nowrap;transform:scaleX(0.9721);transform-origin:0 0;">Accessibility: Good to go</div>
<div style="position:absolute;left:1703px;top:759px;width:40px;height:22px;background:#d2d0ce"></div>
<svg style="position:absolute;left:1716px;top:763px;" width="14" height="14" viewBox="0 0 14 14"><path d="M0.5 0.5h13v13H0.5zM0.5 5h13M0.5 9h13M5 0.5v13M9 0.5v13" fill="none" stroke="#333" stroke-width="1.1"/></svg>
<svg style="position:absolute;left:1756px;top:763px;" width="15" height="14" viewBox="0 0 15 14"><rect x="0.5" y="0.5" width="14" height="13" fill="none" stroke="#333" stroke-width="1.1"/><rect x="3.5" y="3" width="8" height="8" fill="none" stroke="#333" stroke-width="1"/><path d="M5 5.5h5M5 7.5h5M5 9.5h5" stroke="#333" stroke-width="0.8"/></svg>
<svg style="position:absolute;left:1796px;top:763px;" width="15" height="14" viewBox="0 0 15 14"><rect x="0.5" y="0.5" width="14" height="13" fill="none" stroke="#333" stroke-width="1.1"/><path d="M3.5 0.5v6H10V0.5M6.5 0.5v5" fill="none" stroke="#333" stroke-width="1"/></svg>
<div style="position:absolute;left:1829px;top:769px;width:8px;height:1.3px;background:#333"></div>
<div style="position:absolute;left:1842px;top:770px;width:100px;height:1px;background:#444"></div>
<div style="position:absolute;left:1892px;top:767px;width:1px;height:6px;background:#444"></div>
<div style="position:absolute;left:1895px;top:765px;width:4px;height:11px;background:#333"></div>
<svg style="position:absolute;left:1945px;top:764px;" width="11" height="11" viewBox="0 0 11 11"><path d="M5.5 0.5v10M0.5 5.5h10" stroke="#333" stroke-width="1.1"/></svg>
<div id="t95" style="position:absolute;left:1967.52px;top:764.59px;font-size:12px;line-height:12px;color:#444;font-weight:normal;white-space:nowrap;transform:scaleX(0.8658);transform-origin:0 0;">130%</div>
<div style="position:absolute;left:0px;top:0px;width:2015px;height:1px;background:#707070"></div>
<div style="position:absolute;left:0px;top:0px;width:1px;height:782px;background:#707070"></div>
<div style="position:absolute;left:2014px;top:0px;width:1px;height:782px;background:#707070"></div>
<div style="position:absolute;left:0px;top:781px;width:2015px;height:1px;background:#8a8a8a"></div>
</body></html>
